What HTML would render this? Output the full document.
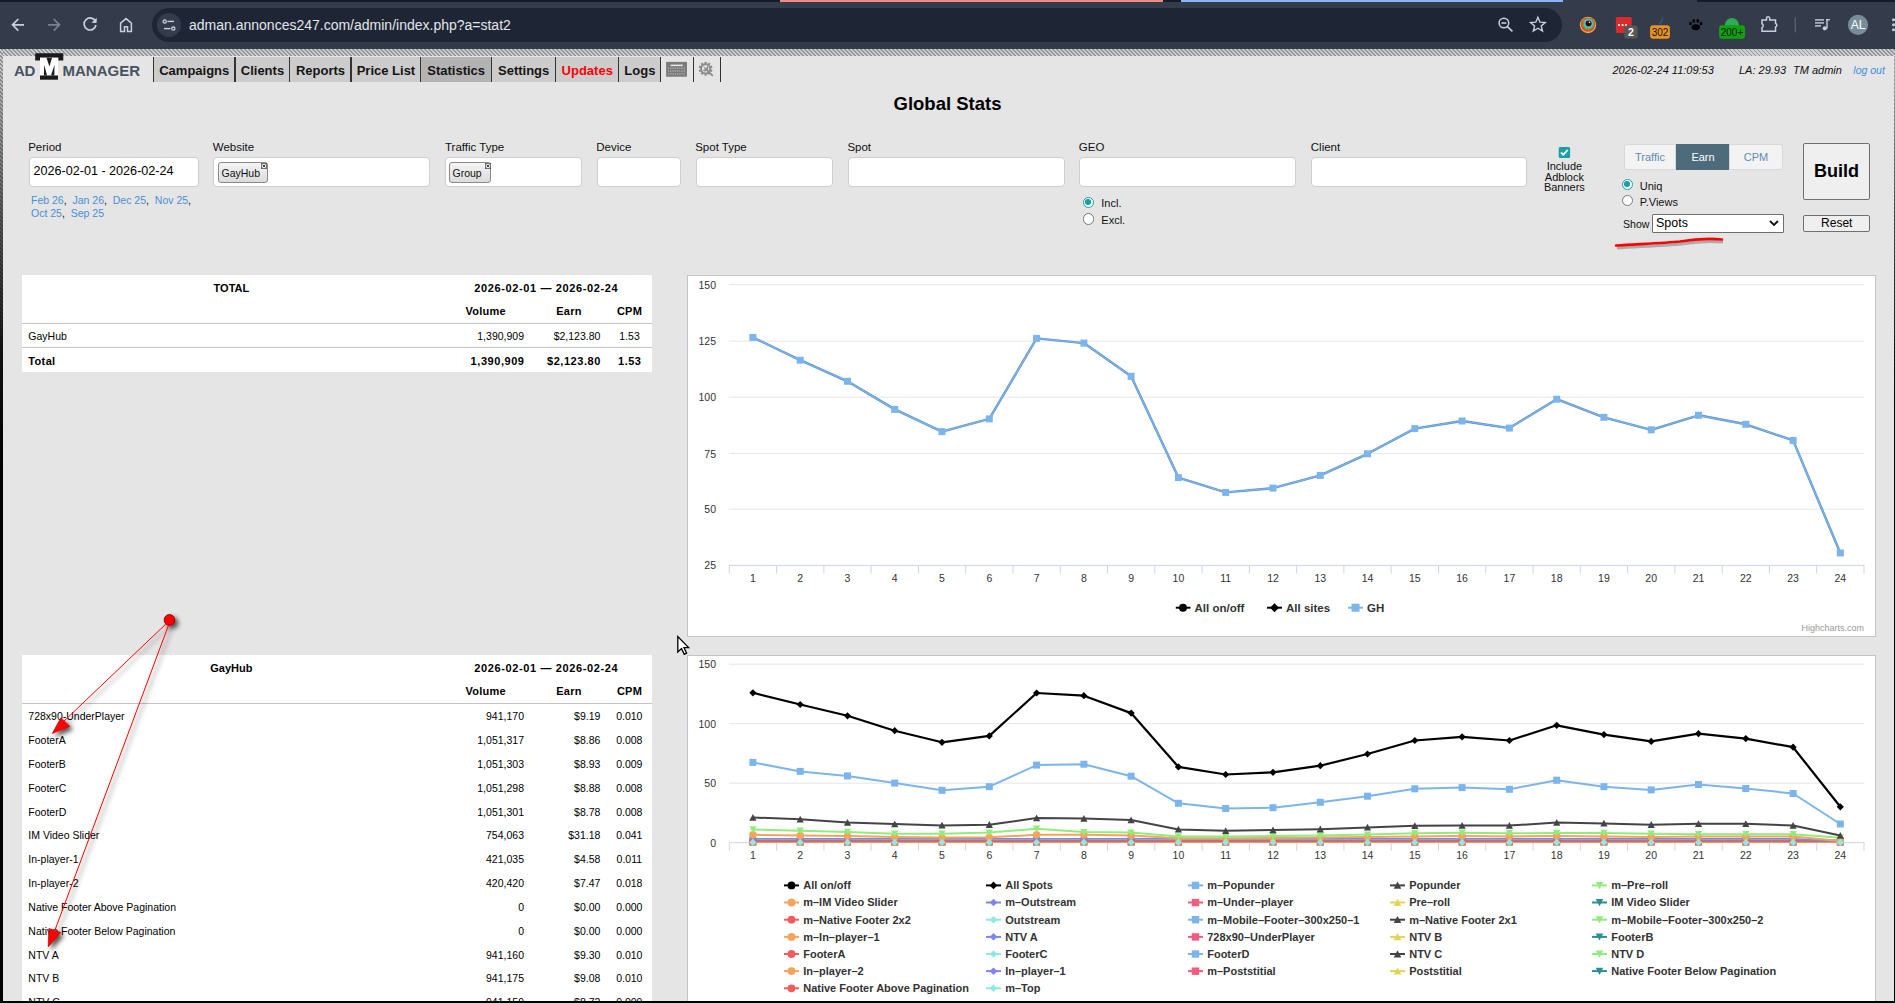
<!DOCTYPE html><html><head><meta charset='utf-8'><style>
*{box-sizing:border-box}
html,body{margin:0;padding:0}
body{width:1895px;height:1003px;overflow:hidden;position:relative;background:#e5e5e5;font-family:"Liberation Sans",sans-serif;color:#000}
.a{position:absolute;white-space:nowrap}
.b{position:absolute}
.hatch{position:absolute;left:0;top:49px;width:1895px;height:7px;background:repeating-linear-gradient(45deg,#cfcfcf 0 1.45px,#959595 1.45px 2.83px)}
.lb{position:absolute;left:0;top:49px;width:3px;height:954px;background:linear-gradient(rgba(0,0,0,0) 0,rgba(0,0,0,0.55) 160px,rgba(0,0,0,0.9) 300px,#000 420px),repeating-linear-gradient(45deg,#cfcfcf 0 1.45px,#959595 1.45px 2.83px)}
.rb{position:absolute;left:1893.5px;top:56px;width:1.5px;height:947px;background:linear-gradient(rgba(0,0,0,0) 0,rgba(0,0,0,0.6) 160px,#000 350px),repeating-linear-gradient(45deg,#cfcfcf 0 1.45px,#959595 1.45px 2.83px)}
.bb{position:absolute;left:0;top:1001px;width:1895px;height:2px;background:#000}
.nav{position:absolute;top:57px;height:25px;background:#cccccc}
.sep{position:absolute;top:57px;height:25px;width:1.6px;background:#333}
.inp{position:absolute;height:30px;background:#fff;border:1px solid #cfcfcf;border-radius:4px;top:157px}
.chart{position:absolute;background:#fff;border:1.5px solid #c4c4c4}
.chip{position:absolute;top:162px;height:20.5px;border:1px solid #8a8a8a;border-radius:3px;background:linear-gradient(#f4f4f4,#dcdcdc)}
.radio{position:absolute;width:11.5px;height:11.5px;border-radius:50%;border:1px solid #777;background:#fff}
.radio.on{border:1.5px solid #1a9fa6}
.radio.on:after{content:'';position:absolute;left:1.5px;top:1.5px;width:5.5px;height:5.5px;border-radius:50%;background:#1a9fa6}
</style></head><body><div class='b' style='left:0;top:0;width:1895px;height:49px;background:#343c4b'></div><div class='b' style='left:0;top:0;width:1895px;height:2px;background:#151c29'></div><div class='b' style='left:780px;top:0;width:383px;height:2px;background:#f28b82'></div><div class='b' style='left:1181px;top:0;width:382px;height:2px;background:#8ab4f8'></div><div class='b' style='left:1563px;top:0;width:134px;height:2px;background:#343c4b'></div><div class='b' style='left:152px;top:8px;width:1410px;height:34px;border-radius:17px;background:#1e2535'></div><div class='b' style='left:157px;top:13px;width:24px;height:24px;border-radius:12px;background:#343c4b'></div><div class='a' style='left:189.00px;top:17.11px;font-size:14px;line-height:16.086px;color:#e3e6ea'>adman.annonces247.com/admin/index.php?a=stat2</div><svg class='b' style='left:0;top:0' width='1895' height='49' viewBox='0 0 1895 49'>
<g fill='none' stroke-linecap='butt' stroke-linejoin='miter'>
<path d='M24 24.8 H13 M18.3 19 L12.5 24.8 L18.3 30.6' stroke='#c7cfdd' stroke-width='1.7'/>
<path d='M48 24.8 H59 M53.7 19 L59.5 24.8 L53.7 30.6' stroke='#7b8392' stroke-width='1.7'/>
<path d='M95.6 21.6 A6 6 0 1 0 96 25' stroke='#c7cfdd' stroke-width='1.7'/>
<path d='M96.2 18.6 V22.4 H92.4 Z' fill='#c7cfdd' stroke='#c7cfdd' stroke-width='1'/>
<path d='M120.6 31.4 V23.2 L126 18.6 L131.4 23.2 V31.4 H127.5 V26.8 H124.5 V31.4 Z' stroke='#c7cfdd' stroke-width='1.5'/>
<circle cx='164.7' cy='21.4' r='1.6' stroke='#c7cfdd' stroke-width='1.3'/>
<path d='M167.5 21.4 H174' stroke='#c7cfdd' stroke-width='1.4'/>
<circle cx='173.3' cy='28.6' r='1.6' stroke='#c7cfdd' stroke-width='1.3'/>
<path d='M164 28.6 H170.5' stroke='#c7cfdd' stroke-width='1.4'/>
<circle cx='1503.9' cy='23' r='4.8' stroke='#c7cfdd' stroke-width='1.5'/>
<path d='M1501.5 23 H1506.3' stroke='#c7cfdd' stroke-width='1.6'/>
<path d='M1507.4 26.6 L1512.4 31.4' stroke='#c7cfdd' stroke-width='1.6'/>
<path d='M1537.9 17.2 L1540 22.2 L1545.2 22.5 L1541.2 25.9 L1542.5 31 L1537.9 28.2 L1533.3 31 L1534.6 25.9 L1530.6 22.5 L1535.8 22.2 Z' stroke='#c7cfdd' stroke-width='1.4'/>
</g>
<circle cx='1588' cy='25' r='8.2' fill='#f0a848'/>
<circle cx='1588' cy='24.6' r='7.2' fill='#e8452c'/>
<circle cx='1588.3' cy='24' r='5.8' fill='#4cb848'/>
<circle cx='1588.5' cy='23.6' r='4.4' fill='#4fc3f7'/>
<circle cx='1588.6' cy='23.4' r='3' fill='#3a0d0d'/>
<circle cx='1589.5' cy='22.3' r='0.8' fill='#fff'/>
<rect x='1615.9' y='17.1' width='15.8' height='15.9' rx='1.5' fill='#d92b2b'/>
<circle cx='1619' cy='25' r='1.1' fill='#fff'/><circle cx='1622.6' cy='25' r='1.1' fill='#fff'/><circle cx='1626' cy='25' r='1.1' fill='#fff'/>
<rect x='1624.2' y='25.4' width='13.5' height='13.1' rx='3' fill='#575757'/>
<text x='1631' y='36.2' text-anchor='middle' style='font-family:"Liberation Sans",sans-serif;font-size:10.5px;font-weight:bold;fill:#fff'>2</text>
<path d='M1663 17.5 Q1662 22 1659 24' stroke='#2b5f8a' stroke-width='1.2' fill='none'/>
<rect x='1650.1' y='25.2' width='19.8' height='13.5' rx='3' fill='#e8921f'/>
<text x='1660' y='35.8' text-anchor='middle' style='font-family:"Liberation Sans",sans-serif;font-size:10px;fill:#111'>302</text>
<g fill='#000'><ellipse cx='1695.8' cy='27.2' rx='4.2' ry='3'/><ellipse cx='1690.5' cy='23.5' rx='1.4' ry='1.8'/><ellipse cx='1693.8' cy='20.8' rx='1.4' ry='1.9'/><ellipse cx='1697.8' cy='20.8' rx='1.4' ry='1.9'/><ellipse cx='1701' cy='23.5' rx='1.4' ry='1.8'/></g>
<circle cx='1731.9' cy='25' r='7' fill='#34a853'/>
<rect x='1719.1' y='25.2' width='25.9' height='13.5' rx='3' fill='#0ca30c'/>
<text x='1732' y='35.8' text-anchor='middle' style='font-family:"Liberation Sans",sans-serif;font-size:10px;fill:#111'>200+</text>
<path d='M1762 20 H1766.5 V18.3 A1.6 1.6 0 0 1 1769.7 18.3 V20 H1775.5 V23.5 A1.8 1.8 0 0 1 1775.5 27 V31.3 H1762 V27.5 A2 2 0 0 0 1762 23.8 Z' fill='none' stroke='#c7cfdd' stroke-width='1.5'/>
<rect x='1794.6' y='17.4' width='1.3' height='15' fill='#5a6272'/>
<g fill='#c7cfdd'><rect x='1815' y='19.2' width='9' height='1.4'/><rect x='1815' y='22.2' width='9' height='1.4'/><rect x='1815' y='25.2' width='6' height='1.4'/><rect x='1826.3' y='19' width='1.4' height='9.5'/><rect x='1826.3' y='19' width='3.6' height='1.4'/><circle cx='1824.8' cy='28.3' r='2.1'/></g>
<circle cx='1858' cy='24.8' r='10.1' fill='#778d98'/>
<text x='1858' y='29.2' text-anchor='middle' style='font-family:"Liberation Sans",sans-serif;font-size:12px;fill:#fff'>AL</text>
<g fill='#c7cfdd'><circle cx='1893.5' cy='19.8' r='1.5'/><circle cx='1893.5' cy='24.8' r='1.5'/><circle cx='1893.5' cy='29.8' r='1.5'/></g>
</svg><div class='hatch'></div><svg class='b' style='left:0;top:49px' width='150' height='40' viewBox='0 49 150 40'>
<path d='M35.2 53.2 H63.3 V60.5 H58.2 V57.7 H40 V60.5 H35.2 Z' fill='#1a1a1a'/>
<rect x='40' y='57.7' width='18.2' height='17.8' fill='#fff'/>
<path d='M46.5 57.7 L49.4 66.5 L52 57.7 Z' fill='#1a1a1a'/>
<path d='M44.2 64.8 L43.9 75.5 H47 Z' fill='#1a1a1a'/>
<path d='M54.5 64.8 L51 75.5 H54.3 Z' fill='#1a1a1a'/>
<rect x='40' y='75.5' width='18' height='4.2' fill='#1a1a1a'/>
</svg><div class='a' style='left:14.00px;top:62.09px;font-size:15px;line-height:17.235px;font-weight:bold;color:#47535e;letter-spacing:-0.3px'>AD</div><div class='a' style='left:62.50px;top:62.09px;font-size:15px;line-height:17.235px;font-weight:bold;color:#47535e'>MANAGER</div><div class='nav' style='left:153.3px;width:81.5px;background:#cccccc'></div><div class='a' style='left:134.25px;width:120px;text-align:center;top:63.63px;font-size:13px;line-height:14.937px;font-weight:bold;color:#141414'>Campaigns</div><div class='nav' style='left:234.8px;width:54.9px;background:#cccccc'></div><div class='a' style='left:202.45px;width:120px;text-align:center;top:63.63px;font-size:13px;line-height:14.937px;font-weight:bold;color:#141414'>Clients</div><div class='nav' style='left:289.7px;width:61.3px;background:#cccccc'></div><div class='a' style='left:260.55px;width:120px;text-align:center;top:63.63px;font-size:13px;line-height:14.937px;font-weight:bold;color:#141414'>Reports</div><div class='nav' style='left:351.0px;width:69.5px;background:#cccccc'></div><div class='a' style='left:325.95px;width:120px;text-align:center;top:63.63px;font-size:13px;line-height:14.937px;font-weight:bold;color:#141414'>Price List</div><div class='nav' style='left:420.5px;width:70.9px;background:#b3b3b3'></div><div class='a' style='left:396.15px;width:120px;text-align:center;top:63.63px;font-size:13px;line-height:14.937px;font-weight:bold;color:#141414'>Statistics</div><div class='nav' style='left:491.4px;width:64.1px;background:#cccccc'></div><div class='a' style='left:463.65px;width:120px;text-align:center;top:63.63px;font-size:13px;line-height:14.937px;font-weight:bold;color:#141414'>Settings</div><div class='nav' style='left:555.5px;width:63.1px;background:#cccccc'></div><div class='a' style='left:527.25px;width:120px;text-align:center;top:63.63px;font-size:13px;line-height:14.937px;font-weight:bold;color:#ff0000'>Updates</div><div class='nav' style='left:618.6px;width:42.1px;background:#cccccc'></div><div class='a' style='left:579.85px;width:120px;text-align:center;top:63.63px;font-size:13px;line-height:14.937px;font-weight:bold;color:#141414'>Logs</div><div class='sep' style='left:152.5px'></div><div class='sep' style='left:234.0px'></div><div class='sep' style='left:288.9px'></div><div class='sep' style='left:350.2px'></div><div class='sep' style='left:419.7px'></div><div class='sep' style='left:490.6px'></div><div class='sep' style='left:554.7px'></div><div class='sep' style='left:617.8px'></div><div class='sep' style='left:659.9px'></div><div class='sep' style='left:692.6px'></div><div class='sep' style='left:719.6px'></div><svg class='b' style='left:664px;top:60px' width='26' height='20' viewBox='664 60 26 20'>
<rect x='666.1' y='61.9' width='20.9' height='14.8' fill='#7a7a7a'/>
<rect x='670.6' y='64.6' width='12.2' height='1.5' fill='#e8e8e8'/>
<g fill='#a8a8a8'><rect x='667.90' y='67.4' width='1.3' height='1.5'/><rect x='670.15' y='67.4' width='1.3' height='1.5'/><rect x='672.40' y='67.4' width='1.3' height='1.5'/><rect x='674.65' y='67.4' width='1.3' height='1.5'/><rect x='676.90' y='67.4' width='1.3' height='1.5'/><rect x='679.15' y='67.4' width='1.3' height='1.5'/><rect x='681.40' y='67.4' width='1.3' height='1.5'/><rect x='683.65' y='67.4' width='1.3' height='1.5'/><rect x='667.90' y='70.3' width='1.3' height='1.5'/><rect x='670.15' y='70.3' width='1.3' height='1.5'/><rect x='672.40' y='70.3' width='1.3' height='1.5'/><rect x='674.65' y='70.3' width='1.3' height='1.5'/><rect x='676.90' y='70.3' width='1.3' height='1.5'/><rect x='679.15' y='70.3' width='1.3' height='1.5'/><rect x='681.40' y='70.3' width='1.3' height='1.5'/><rect x='683.65' y='70.3' width='1.3' height='1.5'/><rect x='667.90' y='73.2' width='1.3' height='1.5'/><rect x='670.15' y='73.2' width='1.3' height='1.5'/><rect x='672.40' y='73.2' width='1.3' height='1.5'/><rect x='674.65' y='73.2' width='1.3' height='1.5'/><rect x='676.90' y='73.2' width='1.3' height='1.5'/><rect x='679.15' y='73.2' width='1.3' height='1.5'/><rect x='681.40' y='73.2' width='1.3' height='1.5'/><rect x='683.65' y='73.2' width='1.3' height='1.5'/></g>
</svg><svg class='b' style='left:696px;top:59px' width='22' height='22' viewBox='696 59 22 22'>
<g fill='#8c8c8c'><rect x='704.50' y='61.90' width='2.2' height='2.4' transform='rotate(0 705.6 68.8)'/><rect x='704.50' y='61.90' width='2.2' height='2.4' transform='rotate(36 705.6 68.8)'/><rect x='704.50' y='61.90' width='2.2' height='2.4' transform='rotate(72 705.6 68.8)'/><rect x='704.50' y='61.90' width='2.2' height='2.4' transform='rotate(108 705.6 68.8)'/><rect x='704.50' y='61.90' width='2.2' height='2.4' transform='rotate(144 705.6 68.8)'/><rect x='704.50' y='61.90' width='2.2' height='2.4' transform='rotate(180 705.6 68.8)'/><rect x='704.50' y='61.90' width='2.2' height='2.4' transform='rotate(216 705.6 68.8)'/><rect x='704.50' y='61.90' width='2.2' height='2.4' transform='rotate(252 705.6 68.8)'/><rect x='704.50' y='61.90' width='2.2' height='2.4' transform='rotate(288 705.6 68.8)'/><rect x='704.50' y='61.90' width='2.2' height='2.4' transform='rotate(324 705.6 68.8)'/></g>
<circle cx='705.6' cy='68.8' r='4.6' fill='none' stroke='#8c8c8c' stroke-width='1.9'/>
<path d='M703.2 66.3 L706.2 68.3 L707.4 65.9 L708.6 67.5 L707.8 69.8 L713.4 75.2 L712.2 76.4 L706.6 71 L704.3 71.6 L702.7 70.2 L704.9 69.2 Z' fill='#8c8c8c'/>
</svg><div class='a' style='left:1612.50px;top:63.67px;font-size:11px;line-height:12.639px;font-style:italic;color:#111'>2026-02-24 11:09:53</div><div class='a' style='left:1739.00px;top:63.67px;font-size:11px;line-height:12.639px;font-style:italic;color:#111'>LA: 29.93</div><div class='a' style='left:1793.00px;top:63.67px;font-size:11px;line-height:12.639px;font-style:italic;color:#111'>TM admin</div><div class='a' style='left:1853.30px;top:64.13px;font-size:10.5px;line-height:12.065px;font-style:italic;color:#3f8fe0'>log out</div><div class='a' style='left:893.50px;top:93.46px;font-size:18.5px;line-height:21.256px;font-weight:bold;color:#000'>Global Stats</div><div class='a' style='left:28.20px;top:141.41px;font-size:11.5px;line-height:13.213px;color:#111'>Period</div><div class='inp' style='left:29px;width:170px'></div><div class='a' style='left:33.50px;top:164.00px;font-size:12.6px;line-height:14.477px;color:#000'>2026-02-01 - 2026-02-24</div><div class='a' style='left:31.00px;top:193.93px;font-size:10.5px;line-height:12.065px;color:#111'><span style='color:#4a8fd6'>Feb 26</span>,&nbsp;&nbsp;<span style='color:#4a8fd6'>Jan 26</span>,&nbsp;&nbsp;<span style='color:#4a8fd6'>Dec 25</span>,&nbsp;&nbsp;<span style='color:#4a8fd6'>Nov 25</span>,</div><div class='a' style='left:31.00px;top:207.13px;font-size:10.5px;line-height:12.065px;color:#111'><span style='color:#4a8fd6'>Oct 25</span>,&nbsp;&nbsp;<span style='color:#4a8fd6'>Sep 25</span></div><div class='a' style='left:212.80px;top:141.41px;font-size:11.5px;line-height:13.213px;color:#111'>Website</div><div class='inp' style='left:213px;width:217px'></div><div class='chip' style='left:218px;width:50px'></div><div class='a' style='left:221.50px;top:167.33px;font-size:10.5px;line-height:12.065px;color:#111'>GayHub</div><div class='a' style='left:445.00px;top:141.41px;font-size:11.5px;line-height:13.213px;color:#111'>Traffic Type</div><div class='inp' style='left:445px;width:137px'></div><div class='chip' style='left:449px;width:42px'></div><div class='a' style='left:452.50px;top:167.33px;font-size:10.5px;line-height:12.065px;color:#111'>Group</div><svg class='b' style='left:261.2px;top:162.8px' width='6' height='6' viewBox='0 0 6 6'><rect x='0.4' y='0.4' width='5.2' height='5.2' fill='#f4f4f4' stroke='#555' stroke-width='0.8'/><path d='M1.6 1.6 L4.4 4.4 M4.4 1.6 L1.6 4.4' stroke='#222' stroke-width='0.9'/></svg><svg class='b' style='left:484.5px;top:162.8px' width='6' height='6' viewBox='0 0 6 6'><rect x='0.4' y='0.4' width='5.2' height='5.2' fill='#f4f4f4' stroke='#555' stroke-width='0.8'/><path d='M1.6 1.6 L4.4 4.4 M4.4 1.6 L1.6 4.4' stroke='#222' stroke-width='0.9'/></svg><div class='a' style='left:596.30px;top:141.41px;font-size:11.5px;line-height:13.213px;color:#111'>Device</div><div class='inp' style='left:597px;width:84px'></div><div class='a' style='left:695.20px;top:141.41px;font-size:11.5px;line-height:13.213px;color:#111'>Spot Type</div><div class='inp' style='left:696px;width:137px'></div><div class='a' style='left:847.40px;top:141.41px;font-size:11.5px;line-height:13.213px;color:#111'>Spot</div><div class='inp' style='left:848px;width:217px'></div><div class='a' style='left:1078.80px;top:141.41px;font-size:11.5px;line-height:13.213px;color:#111'>GEO</div><div class='inp' style='left:1079px;width:217px'></div><div class='radio on' style='left:1082.7px;top:196.9px'></div><div class='radio' style='left:1082.7px;top:213.4px'></div><div class='a' style='left:1101.30px;top:197.37px;font-size:11px;line-height:12.639px;color:#111'>Incl.</div><div class='a' style='left:1101.30px;top:214.47px;font-size:11px;line-height:12.639px;color:#111'>Excl.</div><div class='a' style='left:1310.80px;top:141.41px;font-size:11.5px;line-height:13.213px;color:#111'>Client</div><div class='inp' style='left:1311px;width:216px'></div><svg class='b' style='left:1558px;top:146px' width='13' height='13' viewBox='0 0 13 13'><rect x='0.7' y='1' width='11.4' height='11' rx='1.5' fill='#1a9fa6'/><path d='M3 6.5 L5.3 8.8 L9.8 3.8' stroke='#fff' stroke-width='1.8' fill='none'/></svg><div class='a' style='left:1534.40px;width:60px;text-align:center;top:159.77px;font-size:11px;line-height:12.639px;color:#111'>Include</div><div class='a' style='left:1534.40px;width:60px;text-align:center;top:170.57px;font-size:11px;line-height:12.639px;color:#111'>Adblock</div><div class='a' style='left:1534.40px;width:60px;text-align:center;top:180.57px;font-size:11px;line-height:12.639px;color:#111'>Banners</div><div class='b' style='left:1623.8px;top:143.5px;width:52.6px;height:26px;background:#f3f3f3;border:1px solid #d8d8d8;border-radius:3px 0 0 3px'></div><div class='b' style='left:1676.4px;top:143.5px;width:52.4px;height:26px;background:#4e6b7c;border:1px solid #4e6b7c'></div><div class='b' style='left:1728.8px;top:143.5px;width:54.5px;height:26px;background:#f3f3f3;border:1px solid #d8d8d8;border-radius:0 3px 3px 0'></div><div class='a' style='left:1620.00px;width:60px;text-align:center;top:150.67px;font-size:11px;line-height:12.639px;color:#5b8db5'>Traffic</div><div class='a' style='left:1673.00px;width:60px;text-align:center;top:150.67px;font-size:11px;line-height:12.639px;color:#fff'>Earn</div><div class='a' style='left:1726.00px;width:60px;text-align:center;top:150.67px;font-size:11px;line-height:12.639px;color:#5b8db5'>CPM</div><div class='radio on' style='left:1621.8px;top:178.5px'></div><div class='radio' style='left:1621.8px;top:194.9px'></div><div class='a' style='left:1639.80px;top:179.97px;font-size:11px;line-height:12.639px;color:#111'>Uniq</div><div class='a' style='left:1639.80px;top:195.97px;font-size:11px;line-height:12.639px;color:#111'>P.Views</div><div class='a' style='left:1623.00px;top:218.04px;font-size:10.6px;line-height:12.179px;color:#111'>Show</div><div class='b' style='left:1652.3px;top:214.4px;width:131.4px;height:18.2px;background:#fff;border:1px solid #6e6e6e;border-radius:1px'></div><div class='a' style='left:1656.00px;top:216.29px;font-size:12.5px;line-height:14.363px;color:#000'>Spots</div><svg class='b' style='left:1768px;top:219px' width='12' height='9' viewBox='0 0 12 9'><path d='M2 2 L6 6 L10 2' stroke='#111' stroke-width='1.8' fill='none'/></svg><div class='b' style='left:1803.3px;top:143.3px;width:66.3px;height:56.3px;background:#efefef;border:1px solid #707070;border-radius:2px'></div><div class='a' style='left:1796.50px;width:80px;text-align:center;top:161.42px;font-size:18px;line-height:20.682px;font-weight:bold;color:#000'>Build</div><div class='b' style='left:1803.3px;top:215.3px;width:66.3px;height:17.2px;background:#efefef;border:1px solid #707070;border-radius:2px'></div><div class='a' style='left:1796.80px;width:80px;text-align:center;top:217.35px;font-size:12px;line-height:13.788px;color:#000'>Reset</div><svg class='b' style='left:1600px;top:230px' width='140' height='30' viewBox='1600 230 140 30'>
<path d='M1616 246.5 C1640 245, 1665 244, 1680 242.5 C1695 240, 1712 239.5, 1722 240.5' stroke='rgba(0,0,0,0.25)' stroke-width='3' fill='none' transform='translate(1,1.5)'/>
<path d='M1616 245.5 C1640 244, 1665 243, 1680 241.5 C1695 239, 1712 238.5, 1722 239.5' stroke='#ff0000' stroke-width='2.6' fill='none' stroke-linecap='round'/>
</svg><div class='b' style='left:22px;top:275px;width:630px;height:97px;background:#fff'></div><div class='a' style='left:131.40px;width:200px;text-align:center;top:281.87px;font-size:11px;line-height:12.639px;font-weight:bold;color:#000'>TOTAL</div><div class='a' style='left:474.20px;top:281.87px;font-size:11px;line-height:12.639px;font-weight:bold;color:#000;letter-spacing:0.63px'>2026-02-01 &mdash; 2026-02-24</div><div class='a' style='left:445.80px;width:80px;text-align:center;top:304.77px;font-size:11px;line-height:12.639px;font-weight:bold;color:#000;letter-spacing:0.25px'>Volume</div><div class='a' style='left:529.00px;width:80px;text-align:center;top:304.77px;font-size:11px;line-height:12.639px;font-weight:bold;color:#000;letter-spacing:0.25px'>Earn</div><div class='a' style='left:589.50px;width:80px;text-align:center;top:304.77px;font-size:11px;line-height:12.639px;font-weight:bold;color:#000;letter-spacing:0.25px'>CPM</div><div class='b' style='left:22px;top:322.8px;width:630px;height:1.2px;background:#c4c4c4'></div><div class='a' style='left:28.30px;top:330.33px;font-size:10.5px;line-height:12.065px;color:#000'>GayHub</div><div class='a' style='left:424.00px;width:100px;text-align:right;top:330.33px;font-size:10.5px;line-height:12.065px;color:#000'>1,390,909</div><div class='a' style='left:500.40px;width:100px;text-align:right;top:330.33px;font-size:10.5px;line-height:12.065px;color:#000'>$2,123.80</div><div class='a' style='left:599.50px;width:60px;text-align:center;top:330.33px;font-size:10.5px;line-height:12.065px;color:#000'>1.53</div><div class='b' style='left:22px;top:347px;width:630px;height:1.2px;background:#c4c4c4'></div><div class='a' style='left:28.30px;top:354.57px;font-size:11px;line-height:12.639px;font-weight:bold;color:#000;letter-spacing:0.35px'>Total</div><div class='a' style='left:424.50px;width:100px;text-align:right;top:354.57px;font-size:11px;line-height:12.639px;font-weight:bold;color:#000;letter-spacing:0.55px'>1,390,909</div><div class='a' style='left:500.90px;width:100px;text-align:right;top:354.57px;font-size:11px;line-height:12.639px;font-weight:bold;color:#000;letter-spacing:0.55px'>$2,123.80</div><div class='a' style='left:599.70px;width:60px;text-align:center;top:354.57px;font-size:11px;line-height:12.639px;font-weight:bold;color:#000;letter-spacing:0.45px'>1.53</div><div class='b' style='left:22px;top:655px;width:630px;height:348px;background:#fff'></div><div class='a' style='left:131.40px;width:200px;text-align:center;top:661.87px;font-size:11px;line-height:12.639px;font-weight:bold;color:#000'>GayHub</div><div class='a' style='left:474.20px;top:661.87px;font-size:11px;line-height:12.639px;font-weight:bold;color:#000;letter-spacing:0.63px'>2026-02-01 &mdash; 2026-02-24</div><div class='a' style='left:445.80px;width:80px;text-align:center;top:684.57px;font-size:11px;line-height:12.639px;font-weight:bold;color:#000;letter-spacing:0.25px'>Volume</div><div class='a' style='left:529.00px;width:80px;text-align:center;top:684.57px;font-size:11px;line-height:12.639px;font-weight:bold;color:#000;letter-spacing:0.25px'>Earn</div><div class='a' style='left:589.50px;width:80px;text-align:center;top:684.57px;font-size:11px;line-height:12.639px;font-weight:bold;color:#000;letter-spacing:0.25px'>CPM</div><div class='b' style='left:22px;top:702.8px;width:630px;height:1.2px;background:#c4c4c4'></div><div class='a' style='left:28.30px;top:710.33px;font-size:10.5px;line-height:12.065px;color:#000'>728x90-UnderPlayer</div><div class='a' style='left:424.00px;width:100px;text-align:right;top:710.33px;font-size:10.5px;line-height:12.065px;color:#000'>941,170</div><div class='a' style='left:500.40px;width:100px;text-align:right;top:710.33px;font-size:10.5px;line-height:12.065px;color:#000'>$9.19</div><div class='a' style='left:599.30px;width:60px;text-align:center;top:710.33px;font-size:10.5px;line-height:12.065px;color:#000'>0.010</div><div class='a' style='left:28.30px;top:734.15px;font-size:10.5px;line-height:12.065px;color:#000'>FooterA</div><div class='a' style='left:424.00px;width:100px;text-align:right;top:734.15px;font-size:10.5px;line-height:12.065px;color:#000'>1,051,317</div><div class='a' style='left:500.40px;width:100px;text-align:right;top:734.15px;font-size:10.5px;line-height:12.065px;color:#000'>$8.86</div><div class='a' style='left:599.30px;width:60px;text-align:center;top:734.15px;font-size:10.5px;line-height:12.065px;color:#000'>0.008</div><div class='a' style='left:28.30px;top:757.97px;font-size:10.5px;line-height:12.065px;color:#000'>FooterB</div><div class='a' style='left:424.00px;width:100px;text-align:right;top:757.97px;font-size:10.5px;line-height:12.065px;color:#000'>1,051,303</div><div class='a' style='left:500.40px;width:100px;text-align:right;top:757.97px;font-size:10.5px;line-height:12.065px;color:#000'>$8.93</div><div class='a' style='left:599.30px;width:60px;text-align:center;top:757.97px;font-size:10.5px;line-height:12.065px;color:#000'>0.009</div><div class='a' style='left:28.30px;top:781.79px;font-size:10.5px;line-height:12.065px;color:#000'>FooterC</div><div class='a' style='left:424.00px;width:100px;text-align:right;top:781.79px;font-size:10.5px;line-height:12.065px;color:#000'>1,051,298</div><div class='a' style='left:500.40px;width:100px;text-align:right;top:781.79px;font-size:10.5px;line-height:12.065px;color:#000'>$8.88</div><div class='a' style='left:599.30px;width:60px;text-align:center;top:781.79px;font-size:10.5px;line-height:12.065px;color:#000'>0.008</div><div class='a' style='left:28.30px;top:805.61px;font-size:10.5px;line-height:12.065px;color:#000'>FooterD</div><div class='a' style='left:424.00px;width:100px;text-align:right;top:805.61px;font-size:10.5px;line-height:12.065px;color:#000'>1,051,301</div><div class='a' style='left:500.40px;width:100px;text-align:right;top:805.61px;font-size:10.5px;line-height:12.065px;color:#000'>$8.78</div><div class='a' style='left:599.30px;width:60px;text-align:center;top:805.61px;font-size:10.5px;line-height:12.065px;color:#000'>0.008</div><div class='a' style='left:28.30px;top:829.43px;font-size:10.5px;line-height:12.065px;color:#000'>IM Video Slider</div><div class='a' style='left:424.00px;width:100px;text-align:right;top:829.43px;font-size:10.5px;line-height:12.065px;color:#000'>754,063</div><div class='a' style='left:500.40px;width:100px;text-align:right;top:829.43px;font-size:10.5px;line-height:12.065px;color:#000'>$31.18</div><div class='a' style='left:599.30px;width:60px;text-align:center;top:829.43px;font-size:10.5px;line-height:12.065px;color:#000'>0.041</div><div class='a' style='left:28.30px;top:853.25px;font-size:10.5px;line-height:12.065px;color:#000'>In-player-1</div><div class='a' style='left:424.00px;width:100px;text-align:right;top:853.25px;font-size:10.5px;line-height:12.065px;color:#000'>421,035</div><div class='a' style='left:500.40px;width:100px;text-align:right;top:853.25px;font-size:10.5px;line-height:12.065px;color:#000'>$4.58</div><div class='a' style='left:599.30px;width:60px;text-align:center;top:853.25px;font-size:10.5px;line-height:12.065px;color:#000'>0.011</div><div class='a' style='left:28.30px;top:877.07px;font-size:10.5px;line-height:12.065px;color:#000'>In-player-2</div><div class='a' style='left:424.00px;width:100px;text-align:right;top:877.07px;font-size:10.5px;line-height:12.065px;color:#000'>420,420</div><div class='a' style='left:500.40px;width:100px;text-align:right;top:877.07px;font-size:10.5px;line-height:12.065px;color:#000'>$7.47</div><div class='a' style='left:599.30px;width:60px;text-align:center;top:877.07px;font-size:10.5px;line-height:12.065px;color:#000'>0.018</div><div class='a' style='left:28.30px;top:900.89px;font-size:10.5px;line-height:12.065px;color:#000'>Native Footer Above Pagination</div><div class='a' style='left:424.00px;width:100px;text-align:right;top:900.89px;font-size:10.5px;line-height:12.065px;color:#000'>0</div><div class='a' style='left:500.40px;width:100px;text-align:right;top:900.89px;font-size:10.5px;line-height:12.065px;color:#000'>$0.00</div><div class='a' style='left:599.30px;width:60px;text-align:center;top:900.89px;font-size:10.5px;line-height:12.065px;color:#000'>0.000</div><div class='a' style='left:28.30px;top:924.71px;font-size:10.5px;line-height:12.065px;color:#000'>Native Footer Below Pagination</div><div class='a' style='left:424.00px;width:100px;text-align:right;top:924.71px;font-size:10.5px;line-height:12.065px;color:#000'>0</div><div class='a' style='left:500.40px;width:100px;text-align:right;top:924.71px;font-size:10.5px;line-height:12.065px;color:#000'>$0.00</div><div class='a' style='left:599.30px;width:60px;text-align:center;top:924.71px;font-size:10.5px;line-height:12.065px;color:#000'>0.000</div><div class='a' style='left:28.30px;top:948.53px;font-size:10.5px;line-height:12.065px;color:#000'>NTV A</div><div class='a' style='left:424.00px;width:100px;text-align:right;top:948.53px;font-size:10.5px;line-height:12.065px;color:#000'>941,160</div><div class='a' style='left:500.40px;width:100px;text-align:right;top:948.53px;font-size:10.5px;line-height:12.065px;color:#000'>$9.30</div><div class='a' style='left:599.30px;width:60px;text-align:center;top:948.53px;font-size:10.5px;line-height:12.065px;color:#000'>0.010</div><div class='a' style='left:28.30px;top:972.35px;font-size:10.5px;line-height:12.065px;color:#000'>NTV B</div><div class='a' style='left:424.00px;width:100px;text-align:right;top:972.35px;font-size:10.5px;line-height:12.065px;color:#000'>941,175</div><div class='a' style='left:500.40px;width:100px;text-align:right;top:972.35px;font-size:10.5px;line-height:12.065px;color:#000'>$9.08</div><div class='a' style='left:599.30px;width:60px;text-align:center;top:972.35px;font-size:10.5px;line-height:12.065px;color:#000'>0.010</div><div class='a' style='left:28.30px;top:996.17px;font-size:10.5px;line-height:12.065px;color:#000'>NTV C</div><div class='a' style='left:424.00px;width:100px;text-align:right;top:996.17px;font-size:10.5px;line-height:12.065px;color:#000'>941,159</div><div class='a' style='left:500.40px;width:100px;text-align:right;top:996.17px;font-size:10.5px;line-height:12.065px;color:#000'>$8.72</div><div class='a' style='left:599.30px;width:60px;text-align:center;top:996.17px;font-size:10.5px;line-height:12.065px;color:#000'>0.009</div><div class='chart' style='left:687px;top:275px;width:1188.5px;height:362px'></div><svg class='b' style='left:687px;top:275px' width='1188' height='362' viewBox='687 275 1188 362'><line x1='729' y1='284.7' x2='1864.5' y2='284.7' stroke='#e6e6e6' stroke-width='1'/><text x='716' y='288.7' text-anchor='end' style='font-family:"Liberation Sans",sans-serif;font-size:10.5px;fill:#333'>150</text><line x1='729' y1='341.1' x2='1864.5' y2='341.1' stroke='#e6e6e6' stroke-width='1'/><text x='716' y='345.1' text-anchor='end' style='font-family:"Liberation Sans",sans-serif;font-size:10.5px;fill:#333'>125</text><line x1='729' y1='397.2' x2='1864.5' y2='397.2' stroke='#e6e6e6' stroke-width='1'/><text x='716' y='401.2' text-anchor='end' style='font-family:"Liberation Sans",sans-serif;font-size:10.5px;fill:#333'>100</text><line x1='729' y1='453.5' x2='1864.5' y2='453.5' stroke='#e6e6e6' stroke-width='1'/><text x='716' y='457.5' text-anchor='end' style='font-family:"Liberation Sans",sans-serif;font-size:10.5px;fill:#333'>75</text><line x1='729' y1='509.2' x2='1864.5' y2='509.2' stroke='#e6e6e6' stroke-width='1'/><text x='716' y='513.2' text-anchor='end' style='font-family:"Liberation Sans",sans-serif;font-size:10.5px;fill:#333'>50</text><text x='716' y='569.4' text-anchor='end' style='font-family:"Liberation Sans",sans-serif;font-size:10.5px;fill:#333'>25</text><line x1='729' y1='565.4' x2='1864.5' y2='565.4' stroke='#ccd6eb' stroke-width='1'/><line x1='729.3' y1='565.4' x2='729.3' y2='573.5' stroke='#ccd6eb' stroke-width='1'/><line x1='776.6' y1='565.4' x2='776.6' y2='573.5' stroke='#ccd6eb' stroke-width='1'/><line x1='823.9' y1='565.4' x2='823.9' y2='573.5' stroke='#ccd6eb' stroke-width='1'/><line x1='871.1' y1='565.4' x2='871.1' y2='573.5' stroke='#ccd6eb' stroke-width='1'/><line x1='918.4' y1='565.4' x2='918.4' y2='573.5' stroke='#ccd6eb' stroke-width='1'/><line x1='965.7' y1='565.4' x2='965.7' y2='573.5' stroke='#ccd6eb' stroke-width='1'/><line x1='1013.0' y1='565.4' x2='1013.0' y2='573.5' stroke='#ccd6eb' stroke-width='1'/><line x1='1060.3' y1='565.4' x2='1060.3' y2='573.5' stroke='#ccd6eb' stroke-width='1'/><line x1='1107.5' y1='565.4' x2='1107.5' y2='573.5' stroke='#ccd6eb' stroke-width='1'/><line x1='1154.8' y1='565.4' x2='1154.8' y2='573.5' stroke='#ccd6eb' stroke-width='1'/><line x1='1202.1' y1='565.4' x2='1202.1' y2='573.5' stroke='#ccd6eb' stroke-width='1'/><line x1='1249.4' y1='565.4' x2='1249.4' y2='573.5' stroke='#ccd6eb' stroke-width='1'/><line x1='1296.7' y1='565.4' x2='1296.7' y2='573.5' stroke='#ccd6eb' stroke-width='1'/><line x1='1343.9' y1='565.4' x2='1343.9' y2='573.5' stroke='#ccd6eb' stroke-width='1'/><line x1='1391.2' y1='565.4' x2='1391.2' y2='573.5' stroke='#ccd6eb' stroke-width='1'/><line x1='1438.5' y1='565.4' x2='1438.5' y2='573.5' stroke='#ccd6eb' stroke-width='1'/><line x1='1485.8' y1='565.4' x2='1485.8' y2='573.5' stroke='#ccd6eb' stroke-width='1'/><line x1='1533.1' y1='565.4' x2='1533.1' y2='573.5' stroke='#ccd6eb' stroke-width='1'/><line x1='1580.3' y1='565.4' x2='1580.3' y2='573.5' stroke='#ccd6eb' stroke-width='1'/><line x1='1627.6' y1='565.4' x2='1627.6' y2='573.5' stroke='#ccd6eb' stroke-width='1'/><line x1='1674.9' y1='565.4' x2='1674.9' y2='573.5' stroke='#ccd6eb' stroke-width='1'/><line x1='1722.2' y1='565.4' x2='1722.2' y2='573.5' stroke='#ccd6eb' stroke-width='1'/><line x1='1769.5' y1='565.4' x2='1769.5' y2='573.5' stroke='#ccd6eb' stroke-width='1'/><line x1='1816.7' y1='565.4' x2='1816.7' y2='573.5' stroke='#ccd6eb' stroke-width='1'/><line x1='1864.0' y1='565.4' x2='1864.0' y2='573.5' stroke='#ccd6eb' stroke-width='1'/><text x='752.9' y='581.9' text-anchor='middle' style='font-family:"Liberation Sans",sans-serif;font-size:10.5px;fill:#333'>1</text><text x='800.2' y='581.9' text-anchor='middle' style='font-family:"Liberation Sans",sans-serif;font-size:10.5px;fill:#333'>2</text><text x='847.5' y='581.9' text-anchor='middle' style='font-family:"Liberation Sans",sans-serif;font-size:10.5px;fill:#333'>3</text><text x='894.7' y='581.9' text-anchor='middle' style='font-family:"Liberation Sans",sans-serif;font-size:10.5px;fill:#333'>4</text><text x='942.0' y='581.9' text-anchor='middle' style='font-family:"Liberation Sans",sans-serif;font-size:10.5px;fill:#333'>5</text><text x='989.3' y='581.9' text-anchor='middle' style='font-family:"Liberation Sans",sans-serif;font-size:10.5px;fill:#333'>6</text><text x='1036.6' y='581.9' text-anchor='middle' style='font-family:"Liberation Sans",sans-serif;font-size:10.5px;fill:#333'>7</text><text x='1083.9' y='581.9' text-anchor='middle' style='font-family:"Liberation Sans",sans-serif;font-size:10.5px;fill:#333'>8</text><text x='1131.1' y='581.9' text-anchor='middle' style='font-family:"Liberation Sans",sans-serif;font-size:10.5px;fill:#333'>9</text><text x='1178.4' y='581.9' text-anchor='middle' style='font-family:"Liberation Sans",sans-serif;font-size:10.5px;fill:#333'>10</text><text x='1225.7' y='581.9' text-anchor='middle' style='font-family:"Liberation Sans",sans-serif;font-size:10.5px;fill:#333'>11</text><text x='1273.0' y='581.9' text-anchor='middle' style='font-family:"Liberation Sans",sans-serif;font-size:10.5px;fill:#333'>12</text><text x='1320.3' y='581.9' text-anchor='middle' style='font-family:"Liberation Sans",sans-serif;font-size:10.5px;fill:#333'>13</text><text x='1367.5' y='581.9' text-anchor='middle' style='font-family:"Liberation Sans",sans-serif;font-size:10.5px;fill:#333'>14</text><text x='1414.8' y='581.9' text-anchor='middle' style='font-family:"Liberation Sans",sans-serif;font-size:10.5px;fill:#333'>15</text><text x='1462.1' y='581.9' text-anchor='middle' style='font-family:"Liberation Sans",sans-serif;font-size:10.5px;fill:#333'>16</text><text x='1509.4' y='581.9' text-anchor='middle' style='font-family:"Liberation Sans",sans-serif;font-size:10.5px;fill:#333'>17</text><text x='1556.7' y='581.9' text-anchor='middle' style='font-family:"Liberation Sans",sans-serif;font-size:10.5px;fill:#333'>18</text><text x='1603.9' y='581.9' text-anchor='middle' style='font-family:"Liberation Sans",sans-serif;font-size:10.5px;fill:#333'>19</text><text x='1651.2' y='581.9' text-anchor='middle' style='font-family:"Liberation Sans",sans-serif;font-size:10.5px;fill:#333'>20</text><text x='1698.5' y='581.9' text-anchor='middle' style='font-family:"Liberation Sans",sans-serif;font-size:10.5px;fill:#333'>21</text><text x='1745.8' y='581.9' text-anchor='middle' style='font-family:"Liberation Sans",sans-serif;font-size:10.5px;fill:#333'>22</text><text x='1793.1' y='581.9' text-anchor='middle' style='font-family:"Liberation Sans",sans-serif;font-size:10.5px;fill:#333'>23</text><text x='1840.3' y='581.9' text-anchor='middle' style='font-family:"Liberation Sans",sans-serif;font-size:10.5px;fill:#333'>24</text><polyline points='752.9,337.4 800.2,360.2 847.5,381.3 894.7,409.4 942.0,431.6 989.3,418.9 1036.6,338.4 1083.9,343.1 1131.1,376.3 1178.4,477.6 1225.7,492.4 1273.0,488.1 1320.3,475.4 1367.5,453.8 1414.8,428.6 1462.1,421.0 1509.4,428.1 1556.7,399.2 1603.9,417.3 1651.2,429.8 1698.5,415.3 1745.8,424.3 1793.1,440.4 1840.3,553.0' fill='none' stroke='#5b8fc7' stroke-width='2.4' stroke-linejoin='round'/><polyline points='752.9,337.4 800.2,360.2 847.5,381.3 894.7,409.4 942.0,431.6 989.3,418.9 1036.6,338.4 1083.9,343.1 1131.1,376.3 1178.4,477.6 1225.7,492.4 1273.0,488.1 1320.3,475.4 1367.5,453.8 1414.8,428.6 1462.1,421.0 1509.4,428.1 1556.7,399.2 1603.9,417.3 1651.2,429.8 1698.5,415.3 1745.8,424.3 1793.1,440.4 1840.3,553.0' fill='none' stroke='#7cb5ec' stroke-width='1.2' stroke-linejoin='round'/><rect x='749.4' y='333.9' width='7' height='7' fill='#7cb5ec'/><rect x='796.7' y='356.7' width='7' height='7' fill='#7cb5ec'/><rect x='844.0' y='377.8' width='7' height='7' fill='#7cb5ec'/><rect x='891.2' y='405.9' width='7' height='7' fill='#7cb5ec'/><rect x='938.5' y='428.1' width='7' height='7' fill='#7cb5ec'/><rect x='985.8' y='415.4' width='7' height='7' fill='#7cb5ec'/><rect x='1033.1' y='334.9' width='7' height='7' fill='#7cb5ec'/><rect x='1080.4' y='339.6' width='7' height='7' fill='#7cb5ec'/><rect x='1127.6' y='372.8' width='7' height='7' fill='#7cb5ec'/><rect x='1174.9' y='474.1' width='7' height='7' fill='#7cb5ec'/><rect x='1222.2' y='488.9' width='7' height='7' fill='#7cb5ec'/><rect x='1269.5' y='484.6' width='7' height='7' fill='#7cb5ec'/><rect x='1316.8' y='471.9' width='7' height='7' fill='#7cb5ec'/><rect x='1364.0' y='450.3' width='7' height='7' fill='#7cb5ec'/><rect x='1411.3' y='425.1' width='7' height='7' fill='#7cb5ec'/><rect x='1458.6' y='417.5' width='7' height='7' fill='#7cb5ec'/><rect x='1505.9' y='424.6' width='7' height='7' fill='#7cb5ec'/><rect x='1553.2' y='395.7' width='7' height='7' fill='#7cb5ec'/><rect x='1600.4' y='413.8' width='7' height='7' fill='#7cb5ec'/><rect x='1647.7' y='426.3' width='7' height='7' fill='#7cb5ec'/><rect x='1695.0' y='411.8' width='7' height='7' fill='#7cb5ec'/><rect x='1742.3' y='420.8' width='7' height='7' fill='#7cb5ec'/><rect x='1789.6' y='436.9' width='7' height='7' fill='#7cb5ec'/><rect x='1836.8' y='549.5' width='7' height='7' fill='#7cb5ec'/><line x1='1175.8' y1='607.7' x2='1190.5' y2='607.7' stroke='#000' stroke-width='2'/><circle cx='1183' cy='607.7' r='4' fill='#000'/><text x='1194.5' y='612.2' style='font-family:"Liberation Sans",sans-serif;font-size:11.5px;font-weight:bold;fill:#333'>All on/off</text><line x1='1267' y1='607.7' x2='1282' y2='607.7' stroke='#000' stroke-width='2'/><path d='M1274.5 603.2 L1279 607.7 L1274.5 612.2 L1270 607.7 Z' fill='#000'/><text x='1286' y='612.2' style='font-family:"Liberation Sans",sans-serif;font-size:11.5px;font-weight:bold;fill:#333'>All sites</text><line x1='1348' y1='607.7' x2='1363' y2='607.7' stroke='#7cb5ec' stroke-width='2'/><rect x='1351.5' y='603.7' width='8' height='8' fill='#7cb5ec'/><text x='1367' y='612.2' style='font-family:"Liberation Sans",sans-serif;font-size:11.5px;font-weight:bold;fill:#333'>GH</text><text x='1864' y='630.7' text-anchor='end' style='font-family:"Liberation Sans",sans-serif;font-size:9px;fill:#999'>Highcharts.com</text></svg><div class='chart' style='left:687px;top:655px;width:1188.5px;height:360px'></div><svg class='b' style='left:687px;top:655px' width='1188' height='348' viewBox='687 655 1188 348'><line x1='729' y1='664.2' x2='1864.5' y2='664.2' stroke='#e6e6e6' stroke-width='1'/><text x='716' y='668.2' text-anchor='end' style='font-family:"Liberation Sans",sans-serif;font-size:10.5px;fill:#333'>150</text><line x1='729' y1='723.7' x2='1864.5' y2='723.7' stroke='#e6e6e6' stroke-width='1'/><text x='716' y='727.7' text-anchor='end' style='font-family:"Liberation Sans",sans-serif;font-size:10.5px;fill:#333'>100</text><line x1='729' y1='783.2' x2='1864.5' y2='783.2' stroke='#e6e6e6' stroke-width='1'/><text x='716' y='787.2' text-anchor='end' style='font-family:"Liberation Sans",sans-serif;font-size:10.5px;fill:#333'>50</text><text x='716' y='846.7' text-anchor='end' style='font-family:"Liberation Sans",sans-serif;font-size:10.5px;fill:#333'>0</text><line x1='729' y1='842.7' x2='1864.5' y2='842.7' stroke='#ccd6eb' stroke-width='1'/><line x1='729.3' y1='842.7' x2='729.3' y2='850.8' stroke='#ccd6eb' stroke-width='1'/><line x1='776.6' y1='842.7' x2='776.6' y2='850.8' stroke='#ccd6eb' stroke-width='1'/><line x1='823.9' y1='842.7' x2='823.9' y2='850.8' stroke='#ccd6eb' stroke-width='1'/><line x1='871.1' y1='842.7' x2='871.1' y2='850.8' stroke='#ccd6eb' stroke-width='1'/><line x1='918.4' y1='842.7' x2='918.4' y2='850.8' stroke='#ccd6eb' stroke-width='1'/><line x1='965.7' y1='842.7' x2='965.7' y2='850.8' stroke='#ccd6eb' stroke-width='1'/><line x1='1013.0' y1='842.7' x2='1013.0' y2='850.8' stroke='#ccd6eb' stroke-width='1'/><line x1='1060.3' y1='842.7' x2='1060.3' y2='850.8' stroke='#ccd6eb' stroke-width='1'/><line x1='1107.5' y1='842.7' x2='1107.5' y2='850.8' stroke='#ccd6eb' stroke-width='1'/><line x1='1154.8' y1='842.7' x2='1154.8' y2='850.8' stroke='#ccd6eb' stroke-width='1'/><line x1='1202.1' y1='842.7' x2='1202.1' y2='850.8' stroke='#ccd6eb' stroke-width='1'/><line x1='1249.4' y1='842.7' x2='1249.4' y2='850.8' stroke='#ccd6eb' stroke-width='1'/><line x1='1296.7' y1='842.7' x2='1296.7' y2='850.8' stroke='#ccd6eb' stroke-width='1'/><line x1='1343.9' y1='842.7' x2='1343.9' y2='850.8' stroke='#ccd6eb' stroke-width='1'/><line x1='1391.2' y1='842.7' x2='1391.2' y2='850.8' stroke='#ccd6eb' stroke-width='1'/><line x1='1438.5' y1='842.7' x2='1438.5' y2='850.8' stroke='#ccd6eb' stroke-width='1'/><line x1='1485.8' y1='842.7' x2='1485.8' y2='850.8' stroke='#ccd6eb' stroke-width='1'/><line x1='1533.1' y1='842.7' x2='1533.1' y2='850.8' stroke='#ccd6eb' stroke-width='1'/><line x1='1580.3' y1='842.7' x2='1580.3' y2='850.8' stroke='#ccd6eb' stroke-width='1'/><line x1='1627.6' y1='842.7' x2='1627.6' y2='850.8' stroke='#ccd6eb' stroke-width='1'/><line x1='1674.9' y1='842.7' x2='1674.9' y2='850.8' stroke='#ccd6eb' stroke-width='1'/><line x1='1722.2' y1='842.7' x2='1722.2' y2='850.8' stroke='#ccd6eb' stroke-width='1'/><line x1='1769.5' y1='842.7' x2='1769.5' y2='850.8' stroke='#ccd6eb' stroke-width='1'/><line x1='1816.7' y1='842.7' x2='1816.7' y2='850.8' stroke='#ccd6eb' stroke-width='1'/><line x1='1864.0' y1='842.7' x2='1864.0' y2='850.8' stroke='#ccd6eb' stroke-width='1'/><text x='752.9' y='859.2' text-anchor='middle' style='font-family:"Liberation Sans",sans-serif;font-size:10.5px;fill:#333'>1</text><text x='800.2' y='859.2' text-anchor='middle' style='font-family:"Liberation Sans",sans-serif;font-size:10.5px;fill:#333'>2</text><text x='847.5' y='859.2' text-anchor='middle' style='font-family:"Liberation Sans",sans-serif;font-size:10.5px;fill:#333'>3</text><text x='894.7' y='859.2' text-anchor='middle' style='font-family:"Liberation Sans",sans-serif;font-size:10.5px;fill:#333'>4</text><text x='942.0' y='859.2' text-anchor='middle' style='font-family:"Liberation Sans",sans-serif;font-size:10.5px;fill:#333'>5</text><text x='989.3' y='859.2' text-anchor='middle' style='font-family:"Liberation Sans",sans-serif;font-size:10.5px;fill:#333'>6</text><text x='1036.6' y='859.2' text-anchor='middle' style='font-family:"Liberation Sans",sans-serif;font-size:10.5px;fill:#333'>7</text><text x='1083.9' y='859.2' text-anchor='middle' style='font-family:"Liberation Sans",sans-serif;font-size:10.5px;fill:#333'>8</text><text x='1131.1' y='859.2' text-anchor='middle' style='font-family:"Liberation Sans",sans-serif;font-size:10.5px;fill:#333'>9</text><text x='1178.4' y='859.2' text-anchor='middle' style='font-family:"Liberation Sans",sans-serif;font-size:10.5px;fill:#333'>10</text><text x='1225.7' y='859.2' text-anchor='middle' style='font-family:"Liberation Sans",sans-serif;font-size:10.5px;fill:#333'>11</text><text x='1273.0' y='859.2' text-anchor='middle' style='font-family:"Liberation Sans",sans-serif;font-size:10.5px;fill:#333'>12</text><text x='1320.3' y='859.2' text-anchor='middle' style='font-family:"Liberation Sans",sans-serif;font-size:10.5px;fill:#333'>13</text><text x='1367.5' y='859.2' text-anchor='middle' style='font-family:"Liberation Sans",sans-serif;font-size:10.5px;fill:#333'>14</text><text x='1414.8' y='859.2' text-anchor='middle' style='font-family:"Liberation Sans",sans-serif;font-size:10.5px;fill:#333'>15</text><text x='1462.1' y='859.2' text-anchor='middle' style='font-family:"Liberation Sans",sans-serif;font-size:10.5px;fill:#333'>16</text><text x='1509.4' y='859.2' text-anchor='middle' style='font-family:"Liberation Sans",sans-serif;font-size:10.5px;fill:#333'>17</text><text x='1556.7' y='859.2' text-anchor='middle' style='font-family:"Liberation Sans",sans-serif;font-size:10.5px;fill:#333'>18</text><text x='1603.9' y='859.2' text-anchor='middle' style='font-family:"Liberation Sans",sans-serif;font-size:10.5px;fill:#333'>19</text><text x='1651.2' y='859.2' text-anchor='middle' style='font-family:"Liberation Sans",sans-serif;font-size:10.5px;fill:#333'>20</text><text x='1698.5' y='859.2' text-anchor='middle' style='font-family:"Liberation Sans",sans-serif;font-size:10.5px;fill:#333'>21</text><text x='1745.8' y='859.2' text-anchor='middle' style='font-family:"Liberation Sans",sans-serif;font-size:10.5px;fill:#333'>22</text><text x='1793.1' y='859.2' text-anchor='middle' style='font-family:"Liberation Sans",sans-serif;font-size:10.5px;fill:#333'>23</text><text x='1840.3' y='859.2' text-anchor='middle' style='font-family:"Liberation Sans",sans-serif;font-size:10.5px;fill:#333'>24</text><polyline points='752.9,842.4 800.2,842.4 847.5,842.4 894.7,842.4 942.0,842.4 989.3,842.4 1036.6,842.4 1083.9,842.4 1131.1,842.4 1178.4,842.4 1225.7,842.4 1273.0,842.4 1320.3,842.4 1367.5,842.4 1414.8,842.4 1462.1,842.4 1509.4,842.4 1556.7,842.4 1603.9,842.4 1651.2,842.4 1698.5,842.4 1745.8,842.4 1793.1,842.4 1840.3,842.4' fill='none' stroke='#f15c80' stroke-width='1.2' stroke-linejoin='round'/><rect x='749.4' y='838.9' width='7.0' height='7.0' fill='#f15c80'/><rect x='796.7' y='838.9' width='7.0' height='7.0' fill='#f15c80'/><rect x='844.0' y='838.9' width='7.0' height='7.0' fill='#f15c80'/><rect x='891.2' y='838.9' width='7.0' height='7.0' fill='#f15c80'/><rect x='938.5' y='838.9' width='7.0' height='7.0' fill='#f15c80'/><rect x='985.8' y='838.9' width='7.0' height='7.0' fill='#f15c80'/><rect x='1033.1' y='838.9' width='7.0' height='7.0' fill='#f15c80'/><rect x='1080.4' y='838.9' width='7.0' height='7.0' fill='#f15c80'/><rect x='1127.6' y='838.9' width='7.0' height='7.0' fill='#f15c80'/><rect x='1174.9' y='838.9' width='7.0' height='7.0' fill='#f15c80'/><rect x='1222.2' y='838.9' width='7.0' height='7.0' fill='#f15c80'/><rect x='1269.5' y='838.9' width='7.0' height='7.0' fill='#f15c80'/><rect x='1316.8' y='838.9' width='7.0' height='7.0' fill='#f15c80'/><rect x='1364.0' y='838.9' width='7.0' height='7.0' fill='#f15c80'/><rect x='1411.3' y='838.9' width='7.0' height='7.0' fill='#f15c80'/><rect x='1458.6' y='838.9' width='7.0' height='7.0' fill='#f15c80'/><rect x='1505.9' y='838.9' width='7.0' height='7.0' fill='#f15c80'/><rect x='1553.2' y='838.9' width='7.0' height='7.0' fill='#f15c80'/><rect x='1600.4' y='838.9' width='7.0' height='7.0' fill='#f15c80'/><rect x='1647.7' y='838.9' width='7.0' height='7.0' fill='#f15c80'/><rect x='1695.0' y='838.9' width='7.0' height='7.0' fill='#f15c80'/><rect x='1742.3' y='838.9' width='7.0' height='7.0' fill='#f15c80'/><rect x='1789.6' y='838.9' width='7.0' height='7.0' fill='#f15c80'/><rect x='1836.8' y='838.9' width='7.0' height='7.0' fill='#f15c80'/><polyline points='752.9,842.0 800.2,842.0 847.5,842.0 894.7,842.0 942.0,842.0 989.3,842.0 1036.6,842.0 1083.9,842.0 1131.1,842.0 1178.4,842.0 1225.7,842.0 1273.0,842.0 1320.3,842.0 1367.5,842.0 1414.8,842.0 1462.1,842.0 1509.4,842.0 1556.7,842.0 1603.9,842.0 1651.2,842.0 1698.5,842.0 1745.8,842.0 1793.1,842.0 1840.3,842.0' fill='none' stroke='#e4d354' stroke-width='1.2' stroke-linejoin='round'/><path d='M752.9 838.4 L756.5 845.2 L749.3 845.2 Z' fill='#e4d354'/><path d='M800.2 838.4 L803.8 845.2 L796.6 845.2 Z' fill='#e4d354'/><path d='M847.5 838.4 L851.1 845.2 L843.9 845.2 Z' fill='#e4d354'/><path d='M894.7 838.4 L898.3 845.2 L891.1 845.2 Z' fill='#e4d354'/><path d='M942.0 838.4 L945.6 845.2 L938.4 845.2 Z' fill='#e4d354'/><path d='M989.3 838.4 L992.9 845.2 L985.7 845.2 Z' fill='#e4d354'/><path d='M1036.6 838.4 L1040.2 845.2 L1033.0 845.2 Z' fill='#e4d354'/><path d='M1083.9 838.4 L1087.5 845.2 L1080.3 845.2 Z' fill='#e4d354'/><path d='M1131.1 838.4 L1134.7 845.2 L1127.5 845.2 Z' fill='#e4d354'/><path d='M1178.4 838.4 L1182.0 845.2 L1174.8 845.2 Z' fill='#e4d354'/><path d='M1225.7 838.4 L1229.3 845.2 L1222.1 845.2 Z' fill='#e4d354'/><path d='M1273.0 838.4 L1276.6 845.2 L1269.4 845.2 Z' fill='#e4d354'/><path d='M1320.3 838.4 L1323.9 845.2 L1316.7 845.2 Z' fill='#e4d354'/><path d='M1367.5 838.4 L1371.1 845.2 L1363.9 845.2 Z' fill='#e4d354'/><path d='M1414.8 838.4 L1418.4 845.2 L1411.2 845.2 Z' fill='#e4d354'/><path d='M1462.1 838.4 L1465.7 845.2 L1458.5 845.2 Z' fill='#e4d354'/><path d='M1509.4 838.4 L1513.0 845.2 L1505.8 845.2 Z' fill='#e4d354'/><path d='M1556.7 838.4 L1560.3 845.2 L1553.1 845.2 Z' fill='#e4d354'/><path d='M1603.9 838.4 L1607.5 845.2 L1600.3 845.2 Z' fill='#e4d354'/><path d='M1651.2 838.4 L1654.8 845.2 L1647.6 845.2 Z' fill='#e4d354'/><path d='M1698.5 838.4 L1702.1 845.2 L1694.9 845.2 Z' fill='#e4d354'/><path d='M1745.8 838.4 L1749.4 845.2 L1742.2 845.2 Z' fill='#e4d354'/><path d='M1793.1 838.4 L1796.7 845.2 L1789.5 845.2 Z' fill='#e4d354'/><path d='M1840.3 838.4 L1843.9 845.2 L1836.7 845.2 Z' fill='#e4d354'/><polyline points='752.9,841.3 800.2,841.3 847.5,841.3 894.7,841.3 942.0,841.3 989.3,841.3 1036.6,841.3 1083.9,841.3 1131.1,841.3 1178.4,841.3 1225.7,841.3 1273.0,841.3 1320.3,841.3 1367.5,841.3 1414.8,841.3 1462.1,841.3 1509.4,841.3 1556.7,841.3 1603.9,841.3 1651.2,841.3 1698.5,841.3 1745.8,841.3 1793.1,841.3 1840.3,841.3' fill='none' stroke='#8d8d70' stroke-width='1.2' stroke-linejoin='round'/><rect x='749.4' y='837.8' width='7.0' height='7.0' fill='#8d8d70'/><rect x='796.7' y='837.8' width='7.0' height='7.0' fill='#8d8d70'/><rect x='844.0' y='837.8' width='7.0' height='7.0' fill='#8d8d70'/><rect x='891.2' y='837.8' width='7.0' height='7.0' fill='#8d8d70'/><rect x='938.5' y='837.8' width='7.0' height='7.0' fill='#8d8d70'/><rect x='985.8' y='837.8' width='7.0' height='7.0' fill='#8d8d70'/><rect x='1033.1' y='837.8' width='7.0' height='7.0' fill='#8d8d70'/><rect x='1080.4' y='837.8' width='7.0' height='7.0' fill='#8d8d70'/><rect x='1127.6' y='837.8' width='7.0' height='7.0' fill='#8d8d70'/><rect x='1174.9' y='837.8' width='7.0' height='7.0' fill='#8d8d70'/><rect x='1222.2' y='837.8' width='7.0' height='7.0' fill='#8d8d70'/><rect x='1269.5' y='837.8' width='7.0' height='7.0' fill='#8d8d70'/><rect x='1316.8' y='837.8' width='7.0' height='7.0' fill='#8d8d70'/><rect x='1364.0' y='837.8' width='7.0' height='7.0' fill='#8d8d70'/><rect x='1411.3' y='837.8' width='7.0' height='7.0' fill='#8d8d70'/><rect x='1458.6' y='837.8' width='7.0' height='7.0' fill='#8d8d70'/><rect x='1505.9' y='837.8' width='7.0' height='7.0' fill='#8d8d70'/><rect x='1553.2' y='837.8' width='7.0' height='7.0' fill='#8d8d70'/><rect x='1600.4' y='837.8' width='7.0' height='7.0' fill='#8d8d70'/><rect x='1647.7' y='837.8' width='7.0' height='7.0' fill='#8d8d70'/><rect x='1695.0' y='837.8' width='7.0' height='7.0' fill='#8d8d70'/><rect x='1742.3' y='837.8' width='7.0' height='7.0' fill='#8d8d70'/><rect x='1789.6' y='837.8' width='7.0' height='7.0' fill='#8d8d70'/><rect x='1836.8' y='837.8' width='7.0' height='7.0' fill='#8d8d70'/><polyline points='752.9,840.2 800.2,840.2 847.5,840.2 894.7,840.2 942.0,840.2 989.3,840.2 1036.6,840.2 1083.9,840.2 1131.1,840.2 1178.4,840.2 1225.7,840.2 1273.0,840.2 1320.3,840.2 1367.5,840.2 1414.8,840.2 1462.1,840.2 1509.4,840.2 1556.7,840.2 1603.9,840.2 1651.2,840.2 1698.5,840.2 1745.8,840.2 1793.1,840.2 1840.3,840.2' fill='none' stroke='#2b908f' stroke-width='1.2' stroke-linejoin='round'/><path d='M749.3 837.0 L756.5 837.0 L752.9 843.8 Z' fill='#2b908f'/><path d='M796.6 837.0 L803.8 837.0 L800.2 843.8 Z' fill='#2b908f'/><path d='M843.9 837.0 L851.1 837.0 L847.5 843.8 Z' fill='#2b908f'/><path d='M891.1 837.0 L898.3 837.0 L894.7 843.8 Z' fill='#2b908f'/><path d='M938.4 837.0 L945.6 837.0 L942.0 843.8 Z' fill='#2b908f'/><path d='M985.7 837.0 L992.9 837.0 L989.3 843.8 Z' fill='#2b908f'/><path d='M1033.0 837.0 L1040.2 837.0 L1036.6 843.8 Z' fill='#2b908f'/><path d='M1080.3 837.0 L1087.5 837.0 L1083.9 843.8 Z' fill='#2b908f'/><path d='M1127.5 837.0 L1134.7 837.0 L1131.1 843.8 Z' fill='#2b908f'/><path d='M1174.8 837.0 L1182.0 837.0 L1178.4 843.8 Z' fill='#2b908f'/><path d='M1222.1 837.0 L1229.3 837.0 L1225.7 843.8 Z' fill='#2b908f'/><path d='M1269.4 837.0 L1276.6 837.0 L1273.0 843.8 Z' fill='#2b908f'/><path d='M1316.7 837.0 L1323.9 837.0 L1320.3 843.8 Z' fill='#2b908f'/><path d='M1363.9 837.0 L1371.1 837.0 L1367.5 843.8 Z' fill='#2b908f'/><path d='M1411.2 837.0 L1418.4 837.0 L1414.8 843.8 Z' fill='#2b908f'/><path d='M1458.5 837.0 L1465.7 837.0 L1462.1 843.8 Z' fill='#2b908f'/><path d='M1505.8 837.0 L1513.0 837.0 L1509.4 843.8 Z' fill='#2b908f'/><path d='M1553.1 837.0 L1560.3 837.0 L1556.7 843.8 Z' fill='#2b908f'/><path d='M1600.3 837.0 L1607.5 837.0 L1603.9 843.8 Z' fill='#2b908f'/><path d='M1647.6 837.0 L1654.8 837.0 L1651.2 843.8 Z' fill='#2b908f'/><path d='M1694.9 837.0 L1702.1 837.0 L1698.5 843.8 Z' fill='#2b908f'/><path d='M1742.2 837.0 L1749.4 837.0 L1745.8 843.8 Z' fill='#2b908f'/><path d='M1789.5 837.0 L1796.7 837.0 L1793.1 843.8 Z' fill='#2b908f'/><path d='M1836.7 837.0 L1843.9 837.0 L1840.3 843.8 Z' fill='#2b908f'/><polyline points='752.9,840.8 800.2,840.8 847.5,840.8 894.7,840.8 942.0,840.8 989.3,840.8 1036.6,840.8 1083.9,840.8 1131.1,840.8 1178.4,840.8 1225.7,840.8 1273.0,840.8 1320.3,840.8 1367.5,840.8 1414.8,840.8 1462.1,840.8 1509.4,840.8 1556.7,840.8 1603.9,840.8 1651.2,840.8 1698.5,840.8 1745.8,840.8 1793.1,840.8 1840.3,840.8' fill='none' stroke='#f45b5b' stroke-width='1.2' stroke-linejoin='round'/><circle cx='752.9' cy='840.8' r='3.70' fill='#f45b5b'/><circle cx='800.2' cy='840.8' r='3.70' fill='#f45b5b'/><circle cx='847.5' cy='840.8' r='3.70' fill='#f45b5b'/><circle cx='894.7' cy='840.8' r='3.70' fill='#f45b5b'/><circle cx='942.0' cy='840.8' r='3.70' fill='#f45b5b'/><circle cx='989.3' cy='840.8' r='3.70' fill='#f45b5b'/><circle cx='1036.6' cy='840.8' r='3.70' fill='#f45b5b'/><circle cx='1083.9' cy='840.8' r='3.70' fill='#f45b5b'/><circle cx='1131.1' cy='840.8' r='3.70' fill='#f45b5b'/><circle cx='1178.4' cy='840.8' r='3.70' fill='#f45b5b'/><circle cx='1225.7' cy='840.8' r='3.70' fill='#f45b5b'/><circle cx='1273.0' cy='840.8' r='3.70' fill='#f45b5b'/><circle cx='1320.3' cy='840.8' r='3.70' fill='#f45b5b'/><circle cx='1367.5' cy='840.8' r='3.70' fill='#f45b5b'/><circle cx='1414.8' cy='840.8' r='3.70' fill='#f45b5b'/><circle cx='1462.1' cy='840.8' r='3.70' fill='#f45b5b'/><circle cx='1509.4' cy='840.8' r='3.70' fill='#f45b5b'/><circle cx='1556.7' cy='840.8' r='3.70' fill='#f45b5b'/><circle cx='1603.9' cy='840.8' r='3.70' fill='#f45b5b'/><circle cx='1651.2' cy='840.8' r='3.70' fill='#f45b5b'/><circle cx='1698.5' cy='840.8' r='3.70' fill='#f45b5b'/><circle cx='1745.8' cy='840.8' r='3.70' fill='#f45b5b'/><circle cx='1793.1' cy='840.8' r='3.70' fill='#f45b5b'/><circle cx='1840.3' cy='840.8' r='3.70' fill='#f45b5b'/><polyline points='752.9,838.7 800.2,838.7 847.5,838.7 894.7,838.7 942.0,838.7 989.3,838.7 1036.6,838.7 1083.9,838.7 1131.1,838.7 1178.4,838.7 1225.7,838.7 1273.0,838.7 1320.3,838.7 1367.5,838.7 1414.8,838.7 1462.1,838.7 1509.4,838.7 1556.7,838.7 1603.9,838.7 1651.2,838.7 1698.5,838.7 1745.8,838.7 1793.1,838.7 1840.3,841.5' fill='none' stroke='#8085e9' stroke-width='1.5' stroke-linejoin='round'/><path d='M752.9 835.1 L756.5 838.7 L752.9 842.3 L749.3 838.7 Z' fill='#8085e9'/><path d='M800.2 835.1 L803.8 838.7 L800.2 842.3 L796.6 838.7 Z' fill='#8085e9'/><path d='M847.5 835.1 L851.1 838.7 L847.5 842.3 L843.9 838.7 Z' fill='#8085e9'/><path d='M894.7 835.1 L898.3 838.7 L894.7 842.3 L891.1 838.7 Z' fill='#8085e9'/><path d='M942.0 835.1 L945.6 838.7 L942.0 842.3 L938.4 838.7 Z' fill='#8085e9'/><path d='M989.3 835.1 L992.9 838.7 L989.3 842.3 L985.7 838.7 Z' fill='#8085e9'/><path d='M1036.6 835.1 L1040.2 838.7 L1036.6 842.3 L1033.0 838.7 Z' fill='#8085e9'/><path d='M1083.9 835.1 L1087.5 838.7 L1083.9 842.3 L1080.3 838.7 Z' fill='#8085e9'/><path d='M1131.1 835.1 L1134.7 838.7 L1131.1 842.3 L1127.5 838.7 Z' fill='#8085e9'/><path d='M1178.4 835.1 L1182.0 838.7 L1178.4 842.3 L1174.8 838.7 Z' fill='#8085e9'/><path d='M1225.7 835.1 L1229.3 838.7 L1225.7 842.3 L1222.1 838.7 Z' fill='#8085e9'/><path d='M1273.0 835.1 L1276.6 838.7 L1273.0 842.3 L1269.4 838.7 Z' fill='#8085e9'/><path d='M1320.3 835.1 L1323.9 838.7 L1320.3 842.3 L1316.7 838.7 Z' fill='#8085e9'/><path d='M1367.5 835.1 L1371.1 838.7 L1367.5 842.3 L1363.9 838.7 Z' fill='#8085e9'/><path d='M1414.8 835.1 L1418.4 838.7 L1414.8 842.3 L1411.2 838.7 Z' fill='#8085e9'/><path d='M1462.1 835.1 L1465.7 838.7 L1462.1 842.3 L1458.5 838.7 Z' fill='#8085e9'/><path d='M1509.4 835.1 L1513.0 838.7 L1509.4 842.3 L1505.8 838.7 Z' fill='#8085e9'/><path d='M1556.7 835.1 L1560.3 838.7 L1556.7 842.3 L1553.1 838.7 Z' fill='#8085e9'/><path d='M1603.9 835.1 L1607.5 838.7 L1603.9 842.3 L1600.3 838.7 Z' fill='#8085e9'/><path d='M1651.2 835.1 L1654.8 838.7 L1651.2 842.3 L1647.6 838.7 Z' fill='#8085e9'/><path d='M1698.5 835.1 L1702.1 838.7 L1698.5 842.3 L1694.9 838.7 Z' fill='#8085e9'/><path d='M1745.8 835.1 L1749.4 838.7 L1745.8 842.3 L1742.2 838.7 Z' fill='#8085e9'/><path d='M1793.1 835.1 L1796.7 838.7 L1793.1 842.3 L1789.5 838.7 Z' fill='#8085e9'/><path d='M1840.3 837.9 L1843.9 841.5 L1840.3 845.1 L1836.7 841.5 Z' fill='#8085e9'/><polyline points='752.9,834.8 800.2,835.5 847.5,836.0 894.7,836.9 942.0,837.6 989.3,837.3 1036.6,834.8 1083.9,834.8 1131.1,835.5 1178.4,838.3 1225.7,838.3 1273.0,838.0 1320.3,837.5 1367.5,837.0 1414.8,836.5 1462.1,836.0 1509.4,836.5 1556.7,836.0 1603.9,836.5 1651.2,837.0 1698.5,836.5 1745.8,836.5 1793.1,836.5 1840.3,841.0' fill='none' stroke='#f7a35c' stroke-width='2' stroke-linejoin='round'/><circle cx='752.9' cy='834.8' r='3.70' fill='#f7a35c'/><circle cx='800.2' cy='835.5' r='3.70' fill='#f7a35c'/><circle cx='847.5' cy='836.0' r='3.70' fill='#f7a35c'/><circle cx='894.7' cy='836.9' r='3.70' fill='#f7a35c'/><circle cx='942.0' cy='837.6' r='3.70' fill='#f7a35c'/><circle cx='989.3' cy='837.3' r='3.70' fill='#f7a35c'/><circle cx='1036.6' cy='834.8' r='3.70' fill='#f7a35c'/><circle cx='1083.9' cy='834.8' r='3.70' fill='#f7a35c'/><circle cx='1131.1' cy='835.5' r='3.70' fill='#f7a35c'/><circle cx='1178.4' cy='838.3' r='3.70' fill='#f7a35c'/><circle cx='1225.7' cy='838.3' r='3.70' fill='#f7a35c'/><circle cx='1273.0' cy='838.0' r='3.70' fill='#f7a35c'/><circle cx='1320.3' cy='837.5' r='3.70' fill='#f7a35c'/><circle cx='1367.5' cy='837.0' r='3.70' fill='#f7a35c'/><circle cx='1414.8' cy='836.5' r='3.70' fill='#f7a35c'/><circle cx='1462.1' cy='836.0' r='3.70' fill='#f7a35c'/><circle cx='1509.4' cy='836.5' r='3.70' fill='#f7a35c'/><circle cx='1556.7' cy='836.0' r='3.70' fill='#f7a35c'/><circle cx='1603.9' cy='836.5' r='3.70' fill='#f7a35c'/><circle cx='1651.2' cy='837.0' r='3.70' fill='#f7a35c'/><circle cx='1698.5' cy='836.5' r='3.70' fill='#f7a35c'/><circle cx='1745.8' cy='836.5' r='3.70' fill='#f7a35c'/><circle cx='1793.1' cy='836.5' r='3.70' fill='#f7a35c'/><circle cx='1840.3' cy='841.0' r='3.70' fill='#f7a35c'/><polyline points='752.9,829.4 800.2,830.8 847.5,831.9 894.7,833.7 942.0,833.7 989.3,832.6 1036.6,828.8 1083.9,832.1 1131.1,832.6 1178.4,836.4 1225.7,836.5 1273.0,836.0 1320.3,835.6 1367.5,834.6 1414.8,833.3 1462.1,832.8 1509.4,833.3 1556.7,833.0 1603.9,833.0 1651.2,833.7 1698.5,834.2 1745.8,834.2 1793.1,834.2 1840.3,837.8' fill='none' stroke='#90ed7d' stroke-width='2' stroke-linejoin='round'/><path d='M749.3 826.2 L756.5 826.2 L752.9 833.0 Z' fill='#90ed7d'/><path d='M796.6 827.6 L803.8 827.6 L800.2 834.4 Z' fill='#90ed7d'/><path d='M843.9 828.7 L851.1 828.7 L847.5 835.5 Z' fill='#90ed7d'/><path d='M891.1 830.5 L898.3 830.5 L894.7 837.3 Z' fill='#90ed7d'/><path d='M938.4 830.5 L945.6 830.5 L942.0 837.3 Z' fill='#90ed7d'/><path d='M985.7 829.4 L992.9 829.4 L989.3 836.2 Z' fill='#90ed7d'/><path d='M1033.0 825.6 L1040.2 825.6 L1036.6 832.4 Z' fill='#90ed7d'/><path d='M1080.3 828.9 L1087.5 828.9 L1083.9 835.7 Z' fill='#90ed7d'/><path d='M1127.5 829.4 L1134.7 829.4 L1131.1 836.2 Z' fill='#90ed7d'/><path d='M1174.8 833.2 L1182.0 833.2 L1178.4 840.0 Z' fill='#90ed7d'/><path d='M1222.1 833.3 L1229.3 833.3 L1225.7 840.1 Z' fill='#90ed7d'/><path d='M1269.4 832.8 L1276.6 832.8 L1273.0 839.6 Z' fill='#90ed7d'/><path d='M1316.7 832.4 L1323.9 832.4 L1320.3 839.2 Z' fill='#90ed7d'/><path d='M1363.9 831.4 L1371.1 831.4 L1367.5 838.2 Z' fill='#90ed7d'/><path d='M1411.2 830.1 L1418.4 830.1 L1414.8 836.9 Z' fill='#90ed7d'/><path d='M1458.5 829.6 L1465.7 829.6 L1462.1 836.4 Z' fill='#90ed7d'/><path d='M1505.8 830.1 L1513.0 830.1 L1509.4 836.9 Z' fill='#90ed7d'/><path d='M1553.1 829.8 L1560.3 829.8 L1556.7 836.6 Z' fill='#90ed7d'/><path d='M1600.3 829.8 L1607.5 829.8 L1603.9 836.6 Z' fill='#90ed7d'/><path d='M1647.6 830.5 L1654.8 830.5 L1651.2 837.3 Z' fill='#90ed7d'/><path d='M1694.9 831.0 L1702.1 831.0 L1698.5 837.8 Z' fill='#90ed7d'/><path d='M1742.2 831.0 L1749.4 831.0 L1745.8 837.8 Z' fill='#90ed7d'/><path d='M1789.5 831.0 L1796.7 831.0 L1793.1 837.8 Z' fill='#90ed7d'/><path d='M1836.7 834.6 L1843.9 834.6 L1840.3 841.4 Z' fill='#90ed7d'/><polyline points='752.9,817.5 800.2,819.3 847.5,822.6 894.7,824.0 942.0,825.4 989.3,824.7 1036.6,818.1 1083.9,818.6 1131.1,820.0 1178.4,829.4 1225.7,830.8 1273.0,830.1 1320.3,829.2 1367.5,827.4 1414.8,825.8 1462.1,825.6 1509.4,825.6 1556.7,822.5 1603.9,823.4 1651.2,824.7 1698.5,823.8 1745.8,823.8 1793.1,825.6 1840.3,835.5' fill='none' stroke='#434348' stroke-width='2' stroke-linejoin='round'/><path d='M752.9 813.9 L756.5 820.7 L749.3 820.7 Z' fill='#434348'/><path d='M800.2 815.7 L803.8 822.5 L796.6 822.5 Z' fill='#434348'/><path d='M847.5 819.0 L851.1 825.8 L843.9 825.8 Z' fill='#434348'/><path d='M894.7 820.4 L898.3 827.2 L891.1 827.2 Z' fill='#434348'/><path d='M942.0 821.8 L945.6 828.6 L938.4 828.6 Z' fill='#434348'/><path d='M989.3 821.1 L992.9 827.9 L985.7 827.9 Z' fill='#434348'/><path d='M1036.6 814.5 L1040.2 821.3 L1033.0 821.3 Z' fill='#434348'/><path d='M1083.9 815.0 L1087.5 821.8 L1080.3 821.8 Z' fill='#434348'/><path d='M1131.1 816.4 L1134.7 823.2 L1127.5 823.2 Z' fill='#434348'/><path d='M1178.4 825.8 L1182.0 832.6 L1174.8 832.6 Z' fill='#434348'/><path d='M1225.7 827.2 L1229.3 834.0 L1222.1 834.0 Z' fill='#434348'/><path d='M1273.0 826.5 L1276.6 833.3 L1269.4 833.3 Z' fill='#434348'/><path d='M1320.3 825.6 L1323.9 832.4 L1316.7 832.4 Z' fill='#434348'/><path d='M1367.5 823.8 L1371.1 830.6 L1363.9 830.6 Z' fill='#434348'/><path d='M1414.8 822.2 L1418.4 829.0 L1411.2 829.0 Z' fill='#434348'/><path d='M1462.1 822.0 L1465.7 828.8 L1458.5 828.8 Z' fill='#434348'/><path d='M1509.4 822.0 L1513.0 828.8 L1505.8 828.8 Z' fill='#434348'/><path d='M1556.7 818.9 L1560.3 825.7 L1553.1 825.7 Z' fill='#434348'/><path d='M1603.9 819.8 L1607.5 826.6 L1600.3 826.6 Z' fill='#434348'/><path d='M1651.2 821.1 L1654.8 827.9 L1647.6 827.9 Z' fill='#434348'/><path d='M1698.5 820.2 L1702.1 827.0 L1694.9 827.0 Z' fill='#434348'/><path d='M1745.8 820.2 L1749.4 827.0 L1742.2 827.0 Z' fill='#434348'/><path d='M1793.1 822.0 L1796.7 828.8 L1789.5 828.8 Z' fill='#434348'/><path d='M1840.3 831.9 L1843.9 838.7 L1836.7 838.7 Z' fill='#434348'/><polyline points='752.9,762.4 800.2,771.4 847.5,775.9 894.7,783.1 942.0,790.3 989.3,786.7 1036.6,765.1 1083.9,764.2 1131.1,776.2 1178.4,803.3 1225.7,808.5 1273.0,807.7 1320.3,802.3 1367.5,796.2 1414.8,788.8 1462.1,787.6 1509.4,789.3 1556.7,780.2 1603.9,786.7 1651.2,789.9 1698.5,784.5 1745.8,788.5 1793.1,793.5 1840.3,824.0' fill='none' stroke='#7cb5ec' stroke-width='2' stroke-linejoin='round'/><rect x='749.4' y='758.9' width='7.0' height='7.0' fill='#7cb5ec'/><rect x='796.7' y='767.9' width='7.0' height='7.0' fill='#7cb5ec'/><rect x='844.0' y='772.4' width='7.0' height='7.0' fill='#7cb5ec'/><rect x='891.2' y='779.6' width='7.0' height='7.0' fill='#7cb5ec'/><rect x='938.5' y='786.8' width='7.0' height='7.0' fill='#7cb5ec'/><rect x='985.8' y='783.2' width='7.0' height='7.0' fill='#7cb5ec'/><rect x='1033.1' y='761.6' width='7.0' height='7.0' fill='#7cb5ec'/><rect x='1080.4' y='760.7' width='7.0' height='7.0' fill='#7cb5ec'/><rect x='1127.6' y='772.7' width='7.0' height='7.0' fill='#7cb5ec'/><rect x='1174.9' y='799.8' width='7.0' height='7.0' fill='#7cb5ec'/><rect x='1222.2' y='805.0' width='7.0' height='7.0' fill='#7cb5ec'/><rect x='1269.5' y='804.2' width='7.0' height='7.0' fill='#7cb5ec'/><rect x='1316.8' y='798.8' width='7.0' height='7.0' fill='#7cb5ec'/><rect x='1364.0' y='792.7' width='7.0' height='7.0' fill='#7cb5ec'/><rect x='1411.3' y='785.3' width='7.0' height='7.0' fill='#7cb5ec'/><rect x='1458.6' y='784.1' width='7.0' height='7.0' fill='#7cb5ec'/><rect x='1505.9' y='785.8' width='7.0' height='7.0' fill='#7cb5ec'/><rect x='1553.2' y='776.7' width='7.0' height='7.0' fill='#7cb5ec'/><rect x='1600.4' y='783.2' width='7.0' height='7.0' fill='#7cb5ec'/><rect x='1647.7' y='786.4' width='7.0' height='7.0' fill='#7cb5ec'/><rect x='1695.0' y='781.0' width='7.0' height='7.0' fill='#7cb5ec'/><rect x='1742.3' y='785.0' width='7.0' height='7.0' fill='#7cb5ec'/><rect x='1789.6' y='790.0' width='7.0' height='7.0' fill='#7cb5ec'/><rect x='1836.8' y='820.5' width='7.0' height='7.0' fill='#7cb5ec'/><polyline points='752.9,692.8 800.2,704.5 847.5,715.8 894.7,730.7 942.0,742.3 989.3,735.9 1036.6,693.0 1083.9,695.7 1131.1,713.1 1178.4,766.9 1225.7,774.5 1273.0,772.3 1320.3,765.7 1367.5,754.0 1414.8,740.5 1462.1,736.8 1509.4,740.5 1556.7,725.3 1603.9,734.6 1651.2,741.4 1698.5,733.7 1745.8,738.6 1793.1,747.2 1840.3,806.8' fill='none' stroke='#000000' stroke-width='2.2' stroke-linejoin='round'/><path d='M752.9 689.2 L756.5 692.8 L752.9 696.4 L749.3 692.8 Z' fill='#000000'/><path d='M800.2 700.9 L803.8 704.5 L800.2 708.1 L796.6 704.5 Z' fill='#000000'/><path d='M847.5 712.2 L851.1 715.8 L847.5 719.4 L843.9 715.8 Z' fill='#000000'/><path d='M894.7 727.1 L898.3 730.7 L894.7 734.3 L891.1 730.7 Z' fill='#000000'/><path d='M942.0 738.7 L945.6 742.3 L942.0 745.9 L938.4 742.3 Z' fill='#000000'/><path d='M989.3 732.3 L992.9 735.9 L989.3 739.5 L985.7 735.9 Z' fill='#000000'/><path d='M1036.6 689.4 L1040.2 693.0 L1036.6 696.6 L1033.0 693.0 Z' fill='#000000'/><path d='M1083.9 692.1 L1087.5 695.7 L1083.9 699.3 L1080.3 695.7 Z' fill='#000000'/><path d='M1131.1 709.5 L1134.7 713.1 L1131.1 716.7 L1127.5 713.1 Z' fill='#000000'/><path d='M1178.4 763.3 L1182.0 766.9 L1178.4 770.5 L1174.8 766.9 Z' fill='#000000'/><path d='M1225.7 770.9 L1229.3 774.5 L1225.7 778.1 L1222.1 774.5 Z' fill='#000000'/><path d='M1273.0 768.7 L1276.6 772.3 L1273.0 775.9 L1269.4 772.3 Z' fill='#000000'/><path d='M1320.3 762.1 L1323.9 765.7 L1320.3 769.3 L1316.7 765.7 Z' fill='#000000'/><path d='M1367.5 750.4 L1371.1 754.0 L1367.5 757.6 L1363.9 754.0 Z' fill='#000000'/><path d='M1414.8 736.9 L1418.4 740.5 L1414.8 744.1 L1411.2 740.5 Z' fill='#000000'/><path d='M1462.1 733.2 L1465.7 736.8 L1462.1 740.4 L1458.5 736.8 Z' fill='#000000'/><path d='M1509.4 736.9 L1513.0 740.5 L1509.4 744.1 L1505.8 740.5 Z' fill='#000000'/><path d='M1556.7 721.7 L1560.3 725.3 L1556.7 728.9 L1553.1 725.3 Z' fill='#000000'/><path d='M1603.9 731.0 L1607.5 734.6 L1603.9 738.2 L1600.3 734.6 Z' fill='#000000'/><path d='M1651.2 737.8 L1654.8 741.4 L1651.2 745.0 L1647.6 741.4 Z' fill='#000000'/><path d='M1698.5 730.1 L1702.1 733.7 L1698.5 737.3 L1694.9 733.7 Z' fill='#000000'/><path d='M1745.8 735.0 L1749.4 738.6 L1745.8 742.2 L1742.2 738.6 Z' fill='#000000'/><path d='M1793.1 743.6 L1796.7 747.2 L1793.1 750.8 L1789.5 747.2 Z' fill='#000000'/><path d='M1840.3 803.2 L1843.9 806.8 L1840.3 810.4 L1836.7 806.8 Z' fill='#000000'/><path d='M752.9 838.7 L756.6 842.4 L752.9 846.1 L749.2 842.4 Z' fill='#91e8e1'/><path d='M800.2 838.7 L803.9 842.4 L800.2 846.1 L796.5 842.4 Z' fill='#91e8e1'/><path d='M847.5 838.7 L851.2 842.4 L847.5 846.1 L843.8 842.4 Z' fill='#91e8e1'/><path d='M894.7 838.7 L898.4 842.4 L894.7 846.1 L891.0 842.4 Z' fill='#91e8e1'/><path d='M942.0 838.7 L945.7 842.4 L942.0 846.1 L938.3 842.4 Z' fill='#91e8e1'/><path d='M989.3 838.7 L993.0 842.4 L989.3 846.1 L985.6 842.4 Z' fill='#91e8e1'/><path d='M1036.6 838.7 L1040.3 842.4 L1036.6 846.1 L1032.9 842.4 Z' fill='#91e8e1'/><path d='M1083.9 838.7 L1087.6 842.4 L1083.9 846.1 L1080.2 842.4 Z' fill='#91e8e1'/><path d='M1131.1 838.7 L1134.8 842.4 L1131.1 846.1 L1127.4 842.4 Z' fill='#91e8e1'/><path d='M1178.4 838.7 L1182.1 842.4 L1178.4 846.1 L1174.7 842.4 Z' fill='#91e8e1'/><path d='M1225.7 838.7 L1229.4 842.4 L1225.7 846.1 L1222.0 842.4 Z' fill='#91e8e1'/><path d='M1273.0 838.7 L1276.7 842.4 L1273.0 846.1 L1269.3 842.4 Z' fill='#91e8e1'/><path d='M1320.3 838.7 L1324.0 842.4 L1320.3 846.1 L1316.6 842.4 Z' fill='#91e8e1'/><path d='M1367.5 838.7 L1371.2 842.4 L1367.5 846.1 L1363.8 842.4 Z' fill='#91e8e1'/><path d='M1414.8 838.7 L1418.5 842.4 L1414.8 846.1 L1411.1 842.4 Z' fill='#91e8e1'/><path d='M1462.1 838.7 L1465.8 842.4 L1462.1 846.1 L1458.4 842.4 Z' fill='#91e8e1'/><path d='M1509.4 838.7 L1513.1 842.4 L1509.4 846.1 L1505.7 842.4 Z' fill='#91e8e1'/><path d='M1556.7 838.7 L1560.4 842.4 L1556.7 846.1 L1553.0 842.4 Z' fill='#91e8e1'/><path d='M1603.9 838.7 L1607.6 842.4 L1603.9 846.1 L1600.2 842.4 Z' fill='#91e8e1'/><path d='M1651.2 838.7 L1654.9 842.4 L1651.2 846.1 L1647.5 842.4 Z' fill='#91e8e1'/><path d='M1698.5 838.7 L1702.2 842.4 L1698.5 846.1 L1694.8 842.4 Z' fill='#91e8e1'/><path d='M1745.8 838.7 L1749.5 842.4 L1745.8 846.1 L1742.1 842.4 Z' fill='#91e8e1'/><path d='M1793.1 838.7 L1796.8 842.4 L1793.1 846.1 L1789.4 842.4 Z' fill='#91e8e1'/><path d='M1840.3 838.7 L1844.0 842.4 L1840.3 846.1 L1836.6 842.4 Z' fill='#91e8e1'/><line x1='784.0' y1='885.4' x2='799.0' y2='885.4' stroke='#000000' stroke-width='2'/><circle cx='791.5' cy='885.4' r='3.90' fill='#000000'/><text x='803.2' y='889.2' style='font-family:"Liberation Sans",sans-serif;font-size:11px;font-weight:bold;fill:#333'>All on/off</text><line x1='986.0' y1='885.4' x2='1001.0' y2='885.4' stroke='#000000' stroke-width='2'/><path d='M993.5 881.6 L997.3 885.4 L993.5 889.2 L989.7 885.4 Z' fill='#000000'/><text x='1005.2' y='889.2' style='font-family:"Liberation Sans",sans-serif;font-size:11px;font-weight:bold;fill:#333'>All Spots</text><line x1='1188.0' y1='885.4' x2='1203.0' y2='885.4' stroke='#7cb5ec' stroke-width='2'/><rect x='1191.8' y='881.7' width='7.4' height='7.4' fill='#7cb5ec'/><text x='1207.2' y='889.2' style='font-family:"Liberation Sans",sans-serif;font-size:11px;font-weight:bold;fill:#333'>m&#8211;Popunder</text><line x1='1390.0' y1='885.4' x2='1405.0' y2='885.4' stroke='#434348' stroke-width='2'/><path d='M1397.5 881.6 L1401.3 888.8 L1393.7 888.8 Z' fill='#434348'/><text x='1409.2' y='889.2' style='font-family:"Liberation Sans",sans-serif;font-size:11px;font-weight:bold;fill:#333'>Popunder</text><line x1='1592.0' y1='885.4' x2='1607.0' y2='885.4' stroke='#90ed7d' stroke-width='2'/><path d='M1595.7 882.0 L1603.3 882.0 L1599.5 889.2 Z' fill='#90ed7d'/><text x='1611.2' y='889.2' style='font-family:"Liberation Sans",sans-serif;font-size:11px;font-weight:bold;fill:#333'>m&#8211;Pre&#8211;roll</text><line x1='784.0' y1='902.5' x2='799.0' y2='902.5' stroke='#f7a35c' stroke-width='2'/><circle cx='791.5' cy='902.5' r='3.90' fill='#f7a35c'/><text x='803.2' y='906.3' style='font-family:"Liberation Sans",sans-serif;font-size:11px;font-weight:bold;fill:#333'>m&#8211;IM Video Slider</text><line x1='986.0' y1='902.5' x2='1001.0' y2='902.5' stroke='#8085e9' stroke-width='2'/><path d='M993.5 898.8 L997.3 902.5 L993.5 906.3 L989.7 902.5 Z' fill='#8085e9'/><text x='1005.2' y='906.3' style='font-family:"Liberation Sans",sans-serif;font-size:11px;font-weight:bold;fill:#333'>m&#8211;Outstream</text><line x1='1188.0' y1='902.5' x2='1203.0' y2='902.5' stroke='#f15c80' stroke-width='2'/><rect x='1191.8' y='898.9' width='7.4' height='7.4' fill='#f15c80'/><text x='1207.2' y='906.3' style='font-family:"Liberation Sans",sans-serif;font-size:11px;font-weight:bold;fill:#333'>m&#8211;Under&#8211;player</text><line x1='1390.0' y1='902.5' x2='1405.0' y2='902.5' stroke='#e4d354' stroke-width='2'/><path d='M1397.5 898.8 L1401.3 905.9 L1393.7 905.9 Z' fill='#e4d354'/><text x='1409.2' y='906.3' style='font-family:"Liberation Sans",sans-serif;font-size:11px;font-weight:bold;fill:#333'>Pre&#8211;roll</text><line x1='1592.0' y1='902.5' x2='1607.0' y2='902.5' stroke='#2b908f' stroke-width='2'/><path d='M1595.7 899.1 L1603.3 899.1 L1599.5 906.3 Z' fill='#2b908f'/><text x='1611.2' y='906.3' style='font-family:"Liberation Sans",sans-serif;font-size:11px;font-weight:bold;fill:#333'>IM Video Slider</text><line x1='784.0' y1='919.7' x2='799.0' y2='919.7' stroke='#f45b5b' stroke-width='2'/><circle cx='791.5' cy='919.7' r='3.90' fill='#f45b5b'/><text x='803.2' y='923.5' style='font-family:"Liberation Sans",sans-serif;font-size:11px;font-weight:bold;fill:#333'>m&#8211;Native Footer 2x2</text><line x1='986.0' y1='919.7' x2='1001.0' y2='919.7' stroke='#91e8e1' stroke-width='2'/><path d='M993.5 915.9 L997.3 919.7 L993.5 923.5 L989.7 919.7 Z' fill='#91e8e1'/><text x='1005.2' y='923.5' style='font-family:"Liberation Sans",sans-serif;font-size:11px;font-weight:bold;fill:#333'>Outstream</text><line x1='1188.0' y1='919.7' x2='1203.0' y2='919.7' stroke='#7cb5ec' stroke-width='2'/><rect x='1191.8' y='916.0' width='7.4' height='7.4' fill='#7cb5ec'/><text x='1207.2' y='923.5' style='font-family:"Liberation Sans",sans-serif;font-size:11px;font-weight:bold;fill:#333'>m&#8211;Mobile&#8211;Footer&#8211;300x250&#8211;1</text><line x1='1390.0' y1='919.7' x2='1405.0' y2='919.7' stroke='#434348' stroke-width='2'/><path d='M1397.5 915.9 L1401.3 923.1 L1393.7 923.1 Z' fill='#434348'/><text x='1409.2' y='923.5' style='font-family:"Liberation Sans",sans-serif;font-size:11px;font-weight:bold;fill:#333'>m&#8211;Native Footer 2x1</text><line x1='1592.0' y1='919.7' x2='1607.0' y2='919.7' stroke='#90ed7d' stroke-width='2'/><path d='M1595.7 916.3 L1603.3 916.3 L1599.5 923.5 Z' fill='#90ed7d'/><text x='1611.2' y='923.5' style='font-family:"Liberation Sans",sans-serif;font-size:11px;font-weight:bold;fill:#333'>m&#8211;Mobile&#8211;Footer&#8211;300x250&#8211;2</text><line x1='784.0' y1='936.9' x2='799.0' y2='936.9' stroke='#f7a35c' stroke-width='2'/><circle cx='791.5' cy='936.9' r='3.90' fill='#f7a35c'/><text x='803.2' y='940.6' style='font-family:"Liberation Sans",sans-serif;font-size:11px;font-weight:bold;fill:#333'>m&#8211;In&#8211;player&#8211;1</text><line x1='986.0' y1='936.9' x2='1001.0' y2='936.9' stroke='#8085e9' stroke-width='2'/><path d='M993.5 933.1 L997.3 936.9 L993.5 940.6 L989.7 936.9 Z' fill='#8085e9'/><text x='1005.2' y='940.6' style='font-family:"Liberation Sans",sans-serif;font-size:11px;font-weight:bold;fill:#333'>NTV A</text><line x1='1188.0' y1='936.9' x2='1203.0' y2='936.9' stroke='#f15c80' stroke-width='2'/><rect x='1191.8' y='933.2' width='7.4' height='7.4' fill='#f15c80'/><text x='1207.2' y='940.6' style='font-family:"Liberation Sans",sans-serif;font-size:11px;font-weight:bold;fill:#333'>728x90&#8211;UnderPlayer</text><line x1='1390.0' y1='936.9' x2='1405.0' y2='936.9' stroke='#e4d354' stroke-width='2'/><path d='M1397.5 933.1 L1401.3 940.2 L1393.7 940.2 Z' fill='#e4d354'/><text x='1409.2' y='940.6' style='font-family:"Liberation Sans",sans-serif;font-size:11px;font-weight:bold;fill:#333'>NTV B</text><line x1='1592.0' y1='936.9' x2='1607.0' y2='936.9' stroke='#2b908f' stroke-width='2'/><path d='M1595.7 933.5 L1603.3 933.5 L1599.5 940.6 Z' fill='#2b908f'/><text x='1611.2' y='940.6' style='font-family:"Liberation Sans",sans-serif;font-size:11px;font-weight:bold;fill:#333'>FooterB</text><line x1='784.0' y1='954.0' x2='799.0' y2='954.0' stroke='#f45b5b' stroke-width='2'/><circle cx='791.5' cy='954.0' r='3.90' fill='#f45b5b'/><text x='803.2' y='957.8' style='font-family:"Liberation Sans",sans-serif;font-size:11px;font-weight:bold;fill:#333'>FooterA</text><line x1='986.0' y1='954.0' x2='1001.0' y2='954.0' stroke='#91e8e1' stroke-width='2'/><path d='M993.5 950.2 L997.3 954.0 L993.5 957.8 L989.7 954.0 Z' fill='#91e8e1'/><text x='1005.2' y='957.8' style='font-family:"Liberation Sans",sans-serif;font-size:11px;font-weight:bold;fill:#333'>FooterC</text><line x1='1188.0' y1='954.0' x2='1203.0' y2='954.0' stroke='#7cb5ec' stroke-width='2'/><rect x='1191.8' y='950.3' width='7.4' height='7.4' fill='#7cb5ec'/><text x='1207.2' y='957.8' style='font-family:"Liberation Sans",sans-serif;font-size:11px;font-weight:bold;fill:#333'>FooterD</text><line x1='1390.0' y1='954.0' x2='1405.0' y2='954.0' stroke='#434348' stroke-width='2'/><path d='M1397.5 950.2 L1401.3 957.4 L1393.7 957.4 Z' fill='#434348'/><text x='1409.2' y='957.8' style='font-family:"Liberation Sans",sans-serif;font-size:11px;font-weight:bold;fill:#333'>NTV C</text><line x1='1592.0' y1='954.0' x2='1607.0' y2='954.0' stroke='#90ed7d' stroke-width='2'/><path d='M1595.7 950.6 L1603.3 950.6 L1599.5 957.8 Z' fill='#90ed7d'/><text x='1611.2' y='957.8' style='font-family:"Liberation Sans",sans-serif;font-size:11px;font-weight:bold;fill:#333'>NTV D</text><line x1='784.0' y1='971.1' x2='799.0' y2='971.1' stroke='#f7a35c' stroke-width='2'/><circle cx='791.5' cy='971.1' r='3.90' fill='#f7a35c'/><text x='803.2' y='974.9' style='font-family:"Liberation Sans",sans-serif;font-size:11px;font-weight:bold;fill:#333'>In&#8211;player&#8211;2</text><line x1='986.0' y1='971.1' x2='1001.0' y2='971.1' stroke='#8085e9' stroke-width='2'/><path d='M993.5 967.4 L997.3 971.1 L993.5 974.9 L989.7 971.1 Z' fill='#8085e9'/><text x='1005.2' y='974.9' style='font-family:"Liberation Sans",sans-serif;font-size:11px;font-weight:bold;fill:#333'>In&#8211;player&#8211;1</text><line x1='1188.0' y1='971.1' x2='1203.0' y2='971.1' stroke='#f15c80' stroke-width='2'/><rect x='1191.8' y='967.5' width='7.4' height='7.4' fill='#f15c80'/><text x='1207.2' y='974.9' style='font-family:"Liberation Sans",sans-serif;font-size:11px;font-weight:bold;fill:#333'>m&#8211;Poststitial</text><line x1='1390.0' y1='971.1' x2='1405.0' y2='971.1' stroke='#e4d354' stroke-width='2'/><path d='M1397.5 967.4 L1401.3 974.5 L1393.7 974.5 Z' fill='#e4d354'/><text x='1409.2' y='974.9' style='font-family:"Liberation Sans",sans-serif;font-size:11px;font-weight:bold;fill:#333'>Poststitial</text><line x1='1592.0' y1='971.1' x2='1607.0' y2='971.1' stroke='#2b908f' stroke-width='2'/><path d='M1595.7 967.8 L1603.3 967.8 L1599.5 974.9 Z' fill='#2b908f'/><text x='1611.2' y='974.9' style='font-family:"Liberation Sans",sans-serif;font-size:11px;font-weight:bold;fill:#333'>Native Footer Below Pagination</text><line x1='784.0' y1='988.3' x2='799.0' y2='988.3' stroke='#f45b5b' stroke-width='2'/><circle cx='791.5' cy='988.3' r='3.90' fill='#f45b5b'/><text x='803.2' y='992.1' style='font-family:"Liberation Sans",sans-serif;font-size:11px;font-weight:bold;fill:#333'>Native Footer Above Pagination</text><line x1='986.0' y1='988.3' x2='1001.0' y2='988.3' stroke='#91e8e1' stroke-width='2'/><path d='M993.5 984.5 L997.3 988.3 L993.5 992.1 L989.7 988.3 Z' fill='#91e8e1'/><text x='1005.2' y='992.1' style='font-family:"Liberation Sans",sans-serif;font-size:11px;font-weight:bold;fill:#333'>m&#8211;Top</text></svg><svg class='b' style='left:0;top:560px' width='300' height='443' viewBox='0 560 300 443'>
<defs><filter id='sh' x='-50%' y='-50%' width='200%' height='200%'><feGaussianBlur in='SourceAlpha' stdDeviation='2.4'/><feOffset dx='3' dy='3' result='o'/><feComponentTransfer><feFuncA type='linear' slope='0.7'/></feComponentTransfer><feMerge><feMergeNode/><feMergeNode in='SourceGraphic'/></feMerge></filter></defs>
<g filter='url(#sh)'>
<line x1='165.7' y1='624.2' x2='62' y2='723' stroke='#ff0000' stroke-width='1'/>
<path d='M52.2 733.6 L60.9 717.7 L69.9 726.4 Z' fill='#ff0000' stroke='#b00000' stroke-width='0.6'/>
<line x1='168.8' y1='624.4' x2='55' y2='930' stroke='#ff0000' stroke-width='1'/>
<path d='M48.2 946.9 L48.9 928.4 L60.9 932.4 Z' fill='#ff0000' stroke='#b00000' stroke-width='0.6'/>
<circle cx='169.5' cy='619.9' r='5.3' fill='#ff0000' stroke='#9a0000' stroke-width='1'/>
</g>
</svg><svg class='b' style='left:670px;top:630px' width='30' height='30' viewBox='670 630 30 30'>
<path d='M677.8 636.6 V652 L681.5 648.6 L684.3 654.3 L686.6 653.2 L684 647.6 L688.6 647.6 Z' fill='#fff' stroke='#000' stroke-width='1.3' stroke-linejoin='miter'/>
</svg><div class='lb'></div><div class='rb'></div><div class='bb'></div></body></html>
